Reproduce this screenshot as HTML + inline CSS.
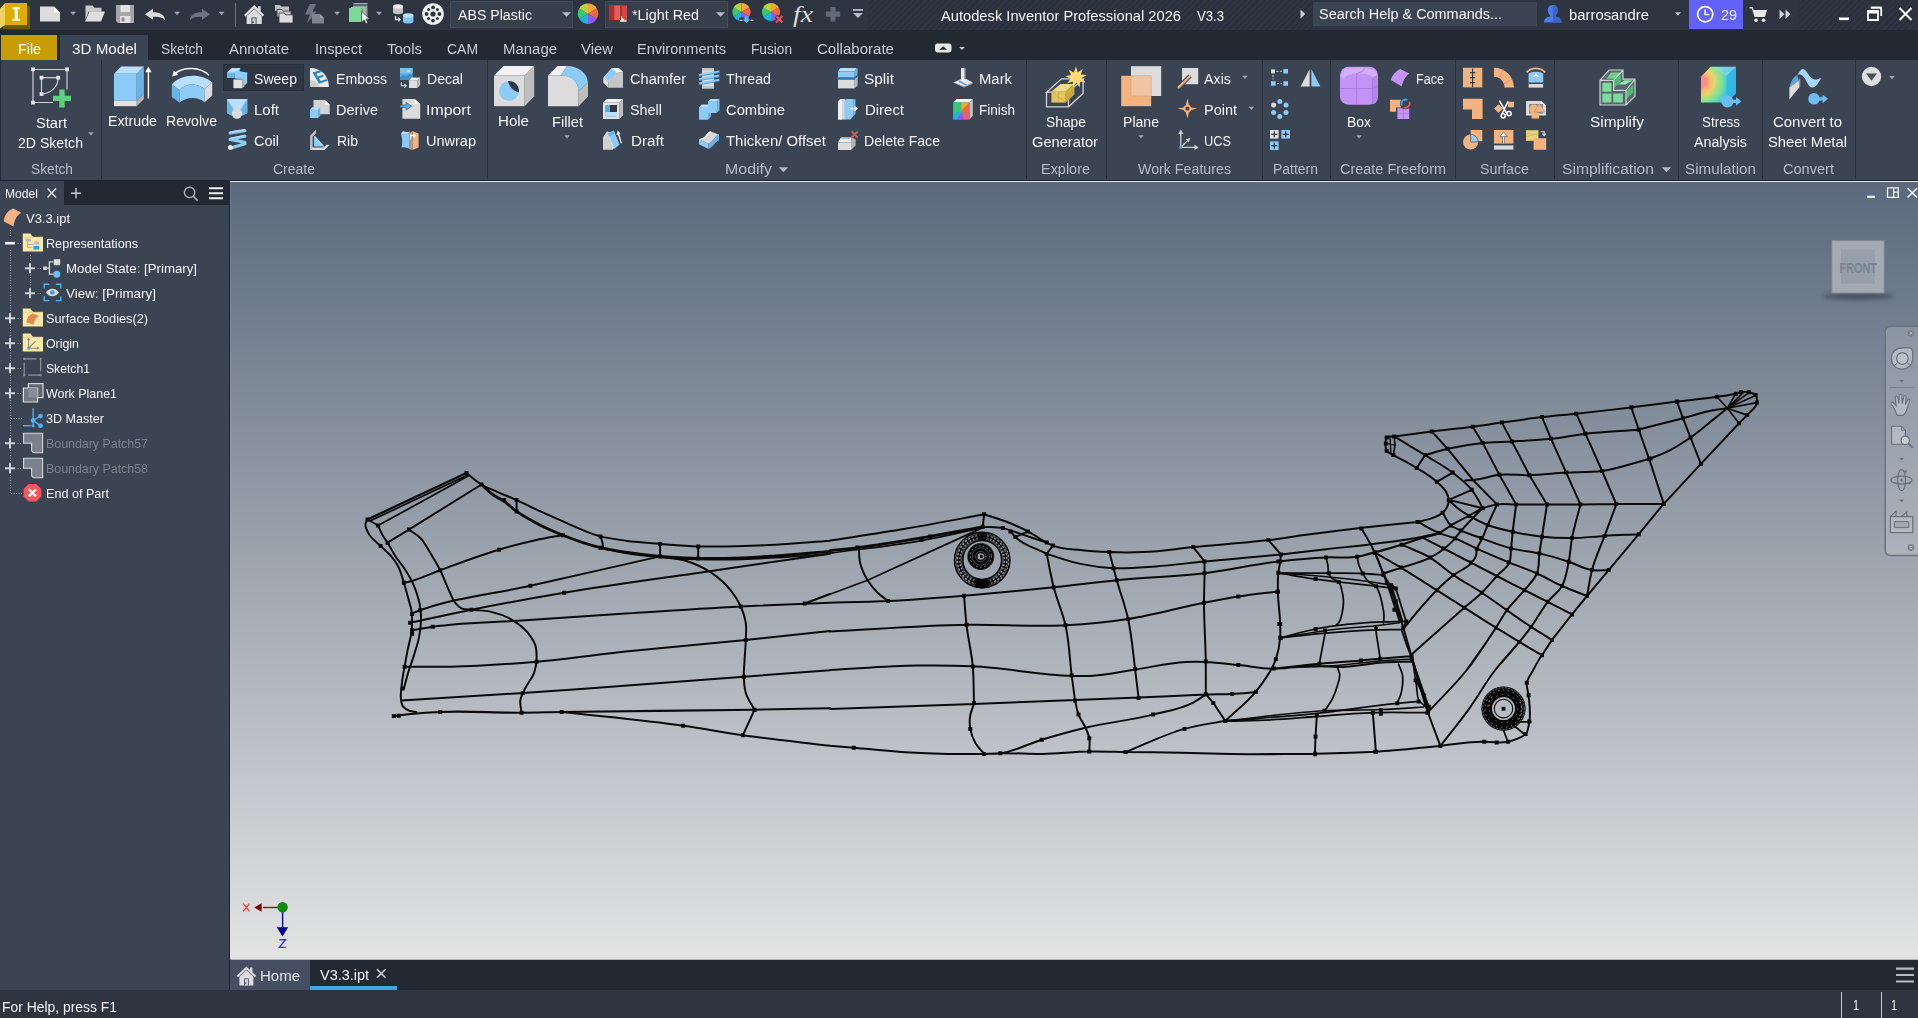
<!DOCTYPE html>
<html lang="en"><head><meta charset="utf-8"><title>Autodesk Inventor Professional 2026 - V3.3</title>
<style>
html,body{margin:0;padding:0;}
body{width:1918px;height:1018px;overflow:hidden;background:#3b4453;position:relative;font-family:"Liberation Sans",sans-serif;}
.r{position:absolute;}
.t{position:absolute;white-space:nowrap;line-height:20px;height:20px;transform-origin:0 50%;}
svg{position:absolute;overflow:visible;}
</style></head><body>
<div class="r" style="left:0px;top:0px;width:1918px;height:30px;background:#2e3440;"></div>
<div class="r" style="left:868px;top:0px;width:445px;height:30px;background:repeating-linear-gradient(135deg,rgba(0,0,0,0) 0 2.2px,rgba(0,0,0,.065) 2.2px 4.4px);"></div>
<div class="r" style="left:1799px;top:0px;width:119px;height:30px;background:repeating-linear-gradient(135deg,rgba(0,0,0,0) 0 2.2px,rgba(0,0,0,.065) 2.2px 4.4px);"></div>
<div class="r" style="left:0px;top:30px;width:1918px;height:30px;background:#222933;"></div>
<div class="r" style="left:1px;top:35px;width:56px;height:25px;background:#c79c07;"></div>
<div class="r" style="left:60px;top:35px;width:88px;height:25px;background:#3b4453;"></div>
<div class="r" style="left:0px;top:60px;width:1918px;height:120px;background:#3b4453;"></div>
<div class="r" style="left:0px;top:60px;width:1px;height:120px;background:#262c38;"></div>
<div class="r" style="left:0px;top:180px;width:1918px;height:1px;background:#1d222c;"></div>
<div class="r" style="left:101px;top:60px;width:1px;height:119px;background:#2a303c;"></div>
<div class="r" style="left:487px;top:60px;width:1px;height:119px;background:#2a303c;"></div>
<div class="r" style="left:1026px;top:60px;width:1px;height:119px;background:#2a303c;"></div>
<div class="r" style="left:1106px;top:60px;width:1px;height:119px;background:#2a303c;"></div>
<div class="r" style="left:1262px;top:60px;width:1px;height:119px;background:#2a303c;"></div>
<div class="r" style="left:1330px;top:60px;width:1px;height:119px;background:#2a303c;"></div>
<div class="r" style="left:1455px;top:60px;width:1px;height:119px;background:#2a303c;"></div>
<div class="r" style="left:1554px;top:60px;width:1px;height:119px;background:#2a303c;"></div>
<div class="r" style="left:1678px;top:60px;width:1px;height:119px;background:#2a303c;"></div>
<div class="r" style="left:1762px;top:60px;width:1px;height:119px;background:#2a303c;"></div>
<div class="r" style="left:1855px;top:60px;width:1px;height:119px;background:#2a303c;"></div>
<div class="r" style="left:223px;top:64px;width:81px;height:27px;background:#2e3644;border:1px solid #282e3a;box-sizing:border-box;"></div>
<div class="r" style="left:0px;top:181px;width:229px;height:24px;background:#222933;"></div>
<div class="r" style="left:0px;top:181px;width:64px;height:24px;background:#3b4453;"></div>
<div class="r" style="left:0px;top:205px;width:229px;height:785px;background:#3b4453;"></div>
<div class="r" style="left:229px;top:181px;width:1px;height:809px;background:#1d222c;"></div>
<div class="r" style="left:230px;top:181px;width:1688px;height:779px;background:linear-gradient(#5a697c,#e3e3e3);border-left:1px solid rgba(255,255,255,.10);border-top:1px solid rgba(255,255,255,.06);border-bottom:1px solid rgba(255,255,255,.5);box-sizing:border-box;"></div>
<div class="r" style="left:230px;top:960px;width:1688px;height:30px;background:#222933;"></div>
<div class="r" style="left:230px;top:960px;width:80px;height:30px;background:#464e62;"></div>
<div class="r" style="left:310px;top:986px;width:87px;height:4px;background:#38a8e0;"></div>
<div class="r" style="left:0px;top:990px;width:1918px;height:28px;background:#2e3440;"></div>
<div class="r" style="left:1841px;top:992px;width:1px;height:26px;background:#c8ccd2;"></div>
<div class="r" style="left:1881px;top:992px;width:1px;height:26px;background:#c8ccd2;"></div>
<div class="r" style="left:1313px;top:2px;width:224px;height:24px;background:#3b4453;"></div>
<div class="r" style="left:450px;top:1px;width:123px;height:27px;background:#373e4c;border:1px solid #434b5b;box-sizing:border-box;"></div>
<div class="r" style="left:605px;top:1px;width:123px;height:27px;background:#373e4c;border:1px solid #434b5b;box-sizing:border-box;"></div>
<div class="r" style="left:1689px;top:0px;width:54px;height:29px;background:#6262fa;"></div>
<div class="r" style="left:235px;top:3px;width:1px;height:24px;background:#6a7383;"></div>
<svg style="left:0;top:0" width="1918" height="1018" viewBox="0 0 1918 1018">
<path d="M3 25h27v4.3H3z M27 6h3v20h-3z" fill="#6e5800"/><path d="M0 8.5L5 3.2V25L0 28.5z" fill="#efd266"/><path d="M5 3h22v22H5z" fill="#dfad00"/><path d="M12.6 7h7.2v2.2h-2.1v9.6h2.1V21h-7.2v-2.2h2.1V9.2h-2.1z" fill="#fff"/>
<path d="M40 6.5h14l6 6v9H40z" fill="#dcdcdc"/><path d="M54 6.5l6 6h-6z" fill="#f6f6f6"/>
<path d="M70.0 11.7h6l-3.0 3.6z" fill="#9aa4b8"/>
<path d="M85.5 5.5h7l2 2.2h7v4H88.5l-3 8z" fill="#c9c9c9"/><path d="M89.5 11.5h15.5l-4 10H85z" fill="#dedede"/>
<path d="M116 5h18v18h-16l-2-2z" fill="#a6a6a6"/><path d="M120.5 5h9.5v7h-9.5z M120 16h10.5v7H120z" fill="#e2e2e2"/><path d="M121.5 17.5h3v4h-3z" fill="#8a8a8a"/>
<path d="M145 14.2l8-5.4v3.4c7 0 11.8 2.6 12 8-2.6-3.2-6.4-3.6-12-3.4v3z" fill="#dcdcdc"/>
<path d="M174.0 11.7h6l-3.0 3.6z" fill="#9aa4b8"/>
<path d="M210 14.2l-8-5.4v3.4c-7 0-11.8 2.6-12 8 2.6-3.2 6.4-3.6 12-3.4v3z" fill="#6d7481"/>
<path d="M218.5 11.7h6l-3.0 3.6z" fill="#9aa4b8"/>
<path d="M244 15l10.2-10 4 3.8V6.2h2.4v5l3.6 3.8-1.6 1.6-8.4-8.2-8.6 8.2z" fill="#dcdcdc"/><path d="M246.6 16.2l7.6-7.2 7.6 7.2V24h-15.2z" fill="#dcdcdc"/><path d="M251.5 17.5h5V24h-5z" fill="#2e3440"/><path d="M252.3 18.3h3.4V24h-3.4z" fill="#cfcfcf"/><path d="M252.3 21.6h1.4V23h-1.4z" fill="#2e3440"/>
<path d="M275 5h5l1.2 1.6H289V11h-14z" fill="#bdbdbd"/><path d="M277 9.5h5l1.2 1.6H291V17h-14z" fill="#c9c9c9" stroke="#2e3440" stroke-width=".8"/><path d="M279 13h5.4l1.2 1.8H293V23h-14z" fill="#dcdcdc" stroke="#2e3440" stroke-width=".8"/>
<path d="M310 4h6l-3.4 7.4h4L307 23.4l2.8-9H305z" fill="#6d7481"/><path d="M312 14h8l4 4v5.6h-12z" fill="#7d8490"/><path d="M320 14l4 4h-4z" fill="#9aa0aa"/>
<path d="M334.0 11.7h6l-3.0 3.6z" fill="#9aa4b8"/>
<path d="M353.5 3h14v1.4h-14z" fill="#6ed08d"/><path d="M353 5.5h14.5V20H353z" fill="#9a9a9a"/><path d="M351 7h14.5v14H351z" fill="#b4b4b4"/><path d="M349 8h12.4v14H349z" fill="#7dd89a"/><path d="M361.4 8h1.8v14h-1.8z" fill="#58b877"/><path d="M361.6 11.2v11l2.6-2.4 1.8 4 1.8-.8-1.8-3.9 3.4-.2z" fill="#fff" stroke="#2e3440" stroke-width=".7"/>
<path d="M376.0 11.7h6l-3.0 3.6z" fill="#9aa4b8"/>
<path d="M393 6.5v6c0 2.2 10 2.2 10 0v-6z" fill="#c4c4c4"/><ellipse cx="398" cy="6.5" rx="5" ry="2.2" fill="#ececec"/><path d="M403 15.5v6.3c0 2.4 10.4 2.4 10.4 0v-6.3z" fill="#7cc4f6"/><ellipse cx="408.2" cy="15.5" rx="5.2" ry="2.2" fill="#b6e0ff"/><path d="M395.5 16v3.5h4.5M398.3 17.6l2 1.9-2 1.9" stroke="#dcdcdc" stroke-width="1.3" fill="none"/>
<circle cx="433" cy="14" r="10" fill="#f2f2f2"/><g fill="#2e3440"><circle cx="433" cy="14" r="2.6"/><circle cx="433" cy="7.4" r="1.9"/><circle cx="433" cy="20.6" r="1.9"/><circle cx="426.6" cy="14" r="1.9"/><circle cx="439.4" cy="14" r="1.9"/><circle cx="428.6" cy="9.6" r="1.5"/><circle cx="437.4" cy="9.6" r="1.5"/><circle cx="428.6" cy="18.4" r="1.5"/><circle cx="437.4" cy="18.4" r="1.5"/></g><circle cx="433" cy="14" r="10" fill="none" stroke="#f2f2f2" stroke-width="1.6"/>
<path d="M562.0 12.2h9l-4.5 4.6z" fill="#b4bccb"/>
<path d="M716.0 12.2h9l-4.5 4.6z" fill="#b4bccb"/>
<path d="M588 13.7L588.00 3.50A10.2 10.2 0 0 1 596.83 8.60z" fill="#f7a531"/><path d="M588 13.7L596.83 8.60A10.2 10.2 0 0 1 596.83 18.80z" fill="#f06449"/><path d="M588 13.7L596.83 18.80A10.2 10.2 0 0 1 588.00 23.90z" fill="#8b5cf6"/><path d="M588 13.7L588.00 23.90A10.2 10.2 0 0 1 579.17 18.80z" fill="#1fb6d9"/><path d="M588 13.7L579.17 18.80A10.2 10.2 0 0 1 579.17 8.60z" fill="#37c978"/><path d="M588 13.7L579.17 8.60A10.2 10.2 0 0 1 588.00 3.50z" fill="#b7d43a"/>
<path d="M741.5 12L741.50 3.00A9 9 0 0 1 749.29 7.50z" fill="#f7a531"/><path d="M741.5 12L749.29 7.50A9 9 0 0 1 749.29 16.50z" fill="#f06449"/><path d="M741.5 12L749.29 16.50A9 9 0 0 1 741.50 21.00z" fill="#8b5cf6"/><path d="M741.5 12L741.50 21.00A9 9 0 0 1 733.71 16.50z" fill="#1fb6d9"/><path d="M741.5 12L733.71 16.50A9 9 0 0 1 733.71 7.50z" fill="#37c978"/><path d="M741.5 12L733.71 7.50A9 9 0 0 1 741.50 3.00z" fill="#b7d43a"/><path d="M739 17.5h12v3h-12z" fill="#2e3440"/><path d="M744.5 16.5h4v3h2l-4 3.6-4-3.6h2z" fill="#5bb5f0"/><path d="M739.5 20.2h3M750.5 20.2h3" stroke="#dcdcdc" stroke-width="1"/>
<path d="M771 12L771.00 3.00A9 9 0 0 1 778.79 7.50z" fill="#f7a531"/><path d="M771 12L778.79 7.50A9 9 0 0 1 778.79 16.50z" fill="#f06449"/><path d="M771 12L778.79 16.50A9 9 0 0 1 771.00 21.00z" fill="#8b5cf6"/><path d="M771 12L771.00 21.00A9 9 0 0 1 763.21 16.50z" fill="#1fb6d9"/><path d="M771 12L763.21 16.50A9 9 0 0 1 763.21 7.50z" fill="#37c978"/><path d="M771 12L763.21 7.50A9 9 0 0 1 771.00 3.00z" fill="#b7d43a"/><path d="M776 16l6.4 6.4M782.4 16L776 22.4" stroke="#2e3440" stroke-width="4.2"/><path d="M776 16l6.4 6.4M782.4 16L776 22.4" stroke="#ee4d5a" stroke-width="2.2"/>
<path d="M609 5.5h18v16.5h-18z" fill="#d24848"/><path d="M609 5.5h5.5v16.5H609z M620 5.5h2.2v16.5H620z" fill="#b52c2c"/><path d="M614.5 5.5h5.5v16.5h-5.5z" fill="#e06060"/><path d="M609 20h18v2h-18z" fill="#8e1e1e"/><path d="M621 15.5l2 3.2h1.2v1.6h2.4v1.4H620v-1.4h1z" fill="#f3f3f3"/>
<text x="793" y="21.5" font-family="Liberation Serif" font-style="italic" font-size="23" fill="#dcdcdc" textLength="20" lengthAdjust="spacingAndGlyphs">fx</text>
<path d="M830.4 7h5.2v4.6h4.6v5.2h-4.6v4.6h-5.2v-4.6h-4.6v-5.2h4.6z" fill="#636a77"/>
<path d="M853 9h10v1.8h-10z" fill="#b4bccb"/>
<path d="M853.0 13.0h10l-5.0 5z" fill="#b4bccb"/>
<path d="M1300.5 9.5l4.8 4.5-4.8 4.5z" fill="#c9cfd8"/>
<path d="M1544 22.5c0-4 3-5.6 6-6v-1.4c-1.6-1-2.2-2.8-2.2-5 0-3.2 2-5.2 5-5.2s5 2 5 5.2c0 2.2-.6 4-2.2 5v1.4c3 .4 6 2 6 6z" fill="#4f7be8"/><path d="M1552.8 4.9c3 0 5 2 5 5.2 0 2.2-.6 4-2.2 5v1.4c3 .4 6 2 6 6h-8.8z" fill="#3b63c8"/>
<path d="M1675.0 12.2h6l-3.0 3.6z" fill="#b4bccb"/>
<circle cx="1705.2" cy="14.2" r="7.6" fill="none" stroke="#fff" stroke-width="1.7"/><path d="M1705.2 9.5v5h4.2" stroke="#fff" stroke-width="1.6" fill="none"/>
<path d="M1749.5 7h3l1 3h13.5l-2 7h-10.5l-2.6-8.6h-2.4z" fill="#e8e8e8"/><circle cx="1756" cy="20.3" r="1.8" fill="#e8e8e8"/><circle cx="1763.6" cy="20.3" r="1.8" fill="#e8e8e8"/>
<path d="M1779.5 9.5l5 4.7-5 4.7z M1785.5 9.5l5 4.7-5 4.7z" fill="#c9cfd8"/>
<path d="M1839 17.5h10v2.6h-10z" fill="#fff"/><path d="M1870.8 7.6h10.4v8.4M1868 11h10v9h-10z" fill="none" stroke="#fff" stroke-width="1.8"/><path d="M1868 11h10v2.4h-10z M1870.8 6.8h10.4v1.8h-10.4z" fill="#fff"/><path d="M1899.5 8l12 12M1911.5 8l-12 12" stroke="#fff" stroke-width="2"/>
<rect x="935" y="43.6" width="16.5" height="8.8" rx="2.4" fill="#e8e8e8"/><path d="M939.4 49.8l3.8-3.6 3.8 3.6z" fill="#222933"/>
<path d="M959.2 46.9h5.6l-2.8 3.2z" fill="#c9cfd8"/>
<g fill="none" stroke="#cfcfcf" stroke-width="1.2"><path d="M33 69.5h34v20M33 69.5v33h20"/><path d="M41.5 77.7h16.7M41.5 77.7V94"/><path d="M58.2 77.7C58 87 51 93.6 41.5 94" /></g><g fill="#e4e4e4"><rect x="31.1" y="67.39999999999999" width="3.8" height="3.8"/><rect x="65.1" y="67.39999999999999" width="3.8" height="3.8"/><rect x="31.1" y="100.69999999999999" width="3.8" height="3.8"/><rect x="39.6" y="75.8" width="3.8" height="3.8"/><rect x="56.300000000000004" y="75.8" width="3.8" height="3.8"/><rect x="39.6" y="92.1" width="3.8" height="3.8"/></g><path d="M59.3 89.4h5.4v6.3H71v5.4h-6.3v6.3h-5.4v-6.3H53v-5.4h6.3z" fill="#5ed17e"/>
<path d="M88.2 132.20000000000002h5.6l-2.8 3.2z" fill="#9aa4b8"/>
<path d="M114 100.8h22.7v5.4H114z" fill="#e2e2e2"/><path d="M136.7 100.8l7.2-7.2V99l-7.2 7.2z" fill="#b4b4b4"/><path d="M114 73.8h22.7v27H114z" fill="#8ccbf8"/><path d="M114 73.8l7.2-7.4h22.7l-7.2 7.4z" fill="#b8e0fd"/><path d="M136.7 73.8l7.2-7.4v27.2l-7.2 7.2z" fill="#6bb2e6"/><path d="M148.4 98.5V70" stroke="#fff" stroke-width="1.4"/><path d="M145.2 72.2l3.2-5.6 3.2 5.6z" fill="#fff"/>
<path d="M171.8 84.5C180 73.5 203 73 212.2 82.5L204.6 89C196 82.6 186 83.4 179.4 90z" fill="#b8e0fd"/><path d="M171.8 84.5L179.4 90v12.6l-7.6-5.6z" fill="#6bb2e6"/><path d="M179.4 90C186 83.4 196 82.6 204.6 89v13.2C197 96 186 97 179.4 102.6z" fill="#8ccbf8"/><path d="M204.6 89l7.6-6.5v13l-7.6 6.7z" fill="#dcdcdc"/><path d="M209 75.2C200 66.5 184 66.6 175 73.4" fill="none" stroke="#fff" stroke-width="1.5"/><path d="M172.2 76.4l1.6-6 4.4 4.4z" fill="#fff"/>
<path d="M227 72.5l5-4.6h8.4l-.8 3.4 7.6 1.2v10.4l-4.6 4.2V79l-8-.6v-4.6z" fill="#8ccbf8"/><path d="M227 72.5h7.6V78H227z" fill="#6bb2e6"/><path d="M232 67.9h8.4l-5.8 4.6H227z" fill="#b8e0fd"/><path d="M233.4 79.4h9v8.8h-9z" fill="#e2e2e2"/><path d="M242.4 79.4l2-1.8v8.6l-2 2z" fill="#b4b4b4"/>
<path d="M227 99h20.3v14l-4.3 2.6h-11.7l-4.3-2.6z" fill="#8ccbf8"/><path d="M227 99l8 11h4.6l7.7-11z" fill="#b8e0fd"/><path d="M227 99l6.4 11.4-2.1 5.2-4.3-2.6zM247.3 99l-6.4 11.4 2.1 5.2 4.3-2.6z" fill="#6bb2e6"/><circle cx="237" cy="113.6" r="5.2" fill="#dcdcdc"/>
<g fill="none" stroke="#8ccbf8" stroke-width="3" stroke-linecap="round"><path d="M230 133l15-2.2M245 136.2l-15 3.2M230 139.6l15 2.6M245 143.8l-13 4"/></g><g fill="none" stroke="#b8e0fd" stroke-width="1.2"><path d="M230 131.8l15-2.2M230 138.4l15-3"/></g><circle cx="230.4" cy="147.4" r="2.5" fill="#e8e8e8"/>
<path d="M310 68c10 0 18.6 6.6 19 19h-19z" fill="#ececec"/><path d="M310 80c4 0 8.6 2.6 9.4 7H310z" fill="#cfcfcf"/><path d="M312.5 72.6l8.6-2.6 1.2 1.8-6 2 1.6 2.6 5-1.6 1 1.6-5 1.8 1.8 2.8 6-2 1 1.8-8.6 3z" fill="#2f86c4"/>
<path d="M313.5 100h11.4l4.8 4.6v9.6h-16.2z" fill="#d4d4d4"/><path d="M324.9 100l4.8 4.6h-4.8z" fill="#f4f4f4"/><path d="M310 109.4h8v8.6h-8z" fill="#8ccbf8"/><path d="M310 109.4l2.2-2.2h8l-2.2 2.2z" fill="#b8e0fd"/><path d="M318 109.4l2.2-2.2v8.6L318 118z" fill="#6bb2e6"/>
<path d="M310 136l6-6v3l-3.6 3.8v10.6h11l3.4-2.6h3l-5.4 5.2H310z" fill="#dcdcdc"/><path d="M316 130v3l-3.6 3.8v10.6L310 150v-14z" fill="#bdbdbd"/><path d="M314 146.4V137c0-.8 1-1 1.400-.4l8.800 9.800z" fill="#8ccbf8"/><path d="M314 137c0-.8 1-1 1.400-.4l8.800 9.800-1.600-.2z" fill="#b8e0fd"/>
<path d="M400 68h12.600v12H400z" fill="#5aa9e0"/><path d="M400 68h12.600v5.400H400z" fill="#7dc2f2"/><path d="M400 77.400l3.200-2.600 2.800 1.600 3-3 3.600 2.400V80H400z" fill="#3f8fcb"/><circle cx="408.800" cy="71.200" r="1.200" fill="#f7e07a"/><path d="M409 80.400h8.400V88H409z" fill="#dcdcdc"/><path d="M409 80.400l2.800-2.800h8.400l-2.800 2.800z" fill="#f0f0f0"/><path d="M417.400 80.400l2.800-2.800v7.600l-2.800 2.800z" fill="#b9b9b9"/><path d="M401.400 82v3.800h4.400M404.400 84l1.800 1.800-1.800 1.800" fill="none" stroke="#dcdcdc" stroke-width="1.100"/>
<path d="M402.400 99h12.400l5.400 5v14.800h-17.800z" fill="#dcdcdc"/><path d="M414.800 99l5.400 5h-5.400z" fill="#f6f6f6"/><path d="M400 105h6v-2.800l5.600 4-5.600 4v-2.800h-6z" fill="#4fb0f4" stroke="#3b4453" stroke-width=".6"/>
<path d="M401 133.400c2.600 1.400 5.400 1.400 8-.2l.600 15.800c-2.600-1.600-5.200-2.400-8-1.400 1-4.600.8-9.400-.600-14.200z" fill="#8ccbf8"/><path d="M401 133.400l2-2.400c2.400 1.200 4.600 1.400 7 .400l-1 1.800c-2.600 1.600-5.400 1.600-8 .2z" fill="#b8e0fd"/><path d="M412.400 131l6.200 2.400v14.200l-6.200 2.400z" fill="#f4b27f"/><path d="M409 133.200l3.400-2.200v19l-2.800-1z" fill="#d89868"/><path d="M409.200 140.600c1.800-1.400 2.600-3.400 2.400-6l1.400.6c.4 3-.4 5.400-2.200 7 1 2.600.8 5-.6 7.200l-1-.4c1.200-2.400 1.200-5 0-8.400z" fill="#9a9a9a"/><path d="M410.600 139.400v-4h3.800M413.200 133.600l2.200 1.800-2.200 1.800" fill="none" stroke="#fff" stroke-width="1.200"/>
<path d="M494 75.600h30.600v30.600H494z" fill="#dcdcdc"/><path d="M494 75.600l9.600-9.600h30.600l-9.600 9.600z" fill="#f2f2f2"/><path d="M524.600 75.600l9.600-9.600v30.600l-9.600 9.600z" fill="#bdbdbd"/><circle cx="509" cy="91" r="10" fill="#8ccbf8"/><path d="M507.800 81.100a10 10 0 0 1 11.100 11.400c-5.200-1.400-9.400-5.400-11.100-11.400z" fill="#2f3745"/>
<path d="M548 75.600l9.600-9.600h9.400L561 75.600z" fill="#f2f2f2"/><path d="M548 75.600h15c8 0 15.600 6.600 15.600 15.400v15.200H548z" fill="#dcdcdc"/><path d="M578.600 91l9.400-8.600v14.200l-9.400 9.600z" fill="#bdbdbd"/><path d="M561 75.600l6-9.600c11 0 20.400 7 21 16.400l-9.400 8.600c0-8.800-7.600-15.400-17.600-15.400z" fill="#8ccbf8"/>
<path d="M564.2 135.20000000000002h5.6l-2.8 3.2z" fill="#9aa4b8"/>
<path d="M603.3 77.7l4.900 4.100v5.900l-4.900-5.300z" fill="#e0e0e0"/><path d="M608.200 81.200l8.300-8.200 6.500-1.200v15.900h-14.800z" fill="#c6c6c6"/><path d="M611.800 68h7.100l4.100 3.800-6.500 1.200z" fill="#f0f0f0"/><path d="M603.300 77.700l8.500-9.700 4.700 5-8.300 8.800z" fill="#ececec"/><path d="M604.200 76.600l7.600-7.800 4.600 4.200-8.200 8.200z" fill="#8ccbf8"/>
<path d="M603 102.600h16.400V119H603z" fill="#e4e4e4"/><path d="M603 102.600l3.800-3.600H623l-3.600 3.600z" fill="#f4f4f4"/><path d="M619.400 102.600L623 99v16.200l-3.600 3.800z" fill="#bdbdbd"/><path d="M605.400 105h11.600v11.600h-11.600z" fill="#2f3745"/><path d="M605.400 105h4.400v7h7.200v4.600h-11.600z" fill="#8ccbf8"/><path d="M605.400 112h11.600v4.600h-11.600z" fill="#b8e0fd"/><path d="M605.400 105h4.400v7h-4.400z" fill="#5aa9e0"/>
<path d="M603 137.200l4.200-5.600 4 1.200 4.400 13.200-2.800 3.400H603z" fill="#dcdcdc"/><path d="M603 137.200l4.200-5.600 3.200 9.400 2.400 8.400H603z" fill="#d0d0d0"/><path d="M608 133.200l5.800-2.600 5.800 14-5.200 4.400z" fill="#8ccbf8"/><path d="M608 133.200l5.800-2.600 1.200 3-5.600 2.800z" fill="#6bb2e6"/><path d="M621.400 143.400l-3-9.600" stroke="#fff" stroke-width="1.300"/><path d="M616.400 135l1.400-4.400 2.800 3.400z" fill="#fff"/>
<path d="M702 68h12v20.400h-12z" fill="#dcdcdc"/><path d="M702 68h12v2.400h-12zM702 86h12v2.400h-12z" fill="#c4c4c4"/><g stroke="#8ccbf8" stroke-width="2" fill="none"><path d="M699 75l20.300-3.600M699 79.200l20.300-3.600M699 83.400l20.300-3.600"/></g><g stroke="#3a8fd0" stroke-width=".8" fill="none"><path d="M699 76.400l20.300-3.600M699 80.600l20.300-3.600M699 84.800l20.300-3.600"/></g>
<path d="M699 107.200h9v-5.600h8.600l2.700-2.600v11.400h-8.600v6.400l-2.700 2.600H699z" fill="#8ccbf8"/><path d="M699 107.200l2.700-2.600h6.300v-3l2.700-2.600h8.600l-2.700 2.600H708v5.600z" fill="#b8e0fd"/><path d="M716.600 101.600l2.700-2.600v11.400l-2.700 2.600zM708 113l2.700-2.600v6.400l-2.700 2.600z" fill="#6bb2e6"/><path d="M699 107.200h9v-5.600h8.600V113H708v6.400h-9z" fill="#8ccbf8"/>
<path d="M699 139.200c2.400-.4 4-1 5.600-2.400 2-1.800 3.200-4.400 5.600-5.500l8.800 3.500c-2.400.6-3.400 2.200-4.600 3.600-1.600 2-3.400 4-6 5.300z" fill="#d8d8d8"/><path d="M699 139.200l9.400 4.500v5.300l-9.400-4.700z" fill="#8ccbf8"/><path d="M708.400 143.700c2.600-1.300 4.400-3.300 6-5.300 1.200-1.400 2.200-3 4.600-3.600v5.600c-2.400.6-3.400 2.200-4.600 3.600-1.600 2-3.400 3.700-6 5z" fill="#6bb2e6"/><path d="M699 139.200c2.400-.4 4-1 5.600-2.400 2-1.800 3.200-4.400 5.600-5.500l1.400.6c-2.400 1.100-3.600 3.700-5.600 5.500-1.600 1.400-3.200 2-5.600 2.400z" fill="#f2f2f2"/>
<path d="M838 71.600l2.400-3.600h16l-1.800 3.600z" fill="#b8e0fd"/><path d="M838 71.600h16.600v6H838z" fill="#8ccbf8"/><path d="M854.600 71.600l1.800-3.600 1.200.6v6l-3 3z" fill="#6bb2e6"/><path d="M836.800 78.200l2-1h17l2.400-2v1.400l-2.400 2.200h-19z" fill="#2f86c4"/><path d="M838 79.600h16.600v8.800H838z" fill="#dcdcdc"/><path d="M854.600 79.600l3-2.800v8.600l-3 3z" fill="#b9b9b9"/>
<path d="M838 103.400c0-2.400 1.400-4.400 4-4.400h3v20.400h-7z" fill="#d6d6d6"/><path d="M838 103.400c0-2.400 1.400-4.400 4-4.400v20.400h-4z" fill="#efefef"/><path d="M844.400 101.600c0-1.600 1-2.600 2.600-2.600h8.600c-1.400 0-2.600 1.200-2.600 2.600v15l-2.400 2.800h-6.200z" fill="#8ccbf8"/><path d="M853 101.600c0-1.400 1.200-2.600 2.600-2.600v14.800l-2.600 2.800z" fill="#6bb2e6"/><path d="M850.400 108.600h5M854.400 106.400l2.600 2.200-2.600 2.200" fill="none" stroke="#fff" stroke-width="1.300"/>
<path d="M838 142.600h13V150h-13z" fill="#dcdcdc"/><path d="M838 142.600l2.800-5h10.800l-.6 5z" fill="#ececec"/><path d="M851 142.600l.6-5 4 1.600v6.400l-4.600 4.400z" fill="#b4b4b4"/><path d="M841.400 137.400h9l-.2 1.600h-9.800z" fill="#8ccbf8"/><path d="M851.600 131.400l6.200 6.200M857.800 131.400l-6.200 6.200" stroke="#ee4d5a" stroke-width="2"/>
<path d="M961 68h3.600v12H961z" fill="#e8e8e8"/><path d="M964.600 68h1v12h-1z" fill="#9a9a9a"/><path d="M953.300 82.400l8-3.400h5l6.500 3.600-8.600 4z" fill="#ececec"/><path d="M958 81.400l1.600-.8 8.400 4.600-1.600.8z" fill="#4a9fe0"/><path d="M953.300 82.400l10.900 4.200 8.600-4v.8l-8.600 4z" fill="#bdbdbd"/>
<path d="M953.300 102.600l3.400-3.600h16.100l-3.400 3.600z" fill="#f4f4f4"/><path d="M969.400 102.600l3.400-3.600v16.800l-3.400 3.600z" fill="#c4c4c4"/><path d="M953.300 102.600h8.050l0 8.400z" fill="#f06449" transform="translate(0 0)"/><path d="M953.300 102.600h16.100v16.800h-16.100z" fill="#37c978"/><path d="M953.300 102.600h8l.05 8.400z" fill="#37c978"/><path d="M961.300 111l-8-8.400h8z" fill="#37c978"/><path d="M961.350 111L953.300 102.600h8.050z" fill="#37c978"/><path d="M961.350 111l0-8.400h8.050z" fill="#f7a531"/><path d="M961.350 111l8.050-8.400v12.600z" fill="#f06449"/><path d="M961.350 111l8.050 4.200v4.200h-5.400z" fill="#ee5a7a"/><path d="M961.350 111l2.650 8.400h-7z" fill="#8b5cf6"/><path d="M961.350 111l-4.350 8.400h-3.700v-6z" fill="#1fb6d9"/><path d="M961.350 111l-8.050 2.400V102.600z" fill="#37c978"/>
<g fill="none" stroke="#d4d4d4" stroke-width="1.3"><path d="M1046.500 92.200l15-13.400h21.600l-14.600 13.400zM1046.500 92.200v14.600h22v-14.600M1068.500 106.800l14.600-13.400V78.800"/></g><path d="M1051.400 91.600l9-7.600h14l-8.600 7.600z" fill="#f0d98a"/><path d="M1051.400 91.600h14.400v11h-14.400z" fill="#e3c45c"/><path d="M1065.800 91.600l8.600-7.600v10.400l-8.600 8.200z" fill="#c9a93e"/><path d="M1052 92l13.400 10M1058.600 91.600v11" stroke="#d1b046" stroke-width=".8"/><path d="M1076 66.600l1.800 5.800 5-3.600-2 5.600 6 .6-5.200 3 4 4.400-6-1 .4 6-3.600-4.800-3.400 5-.2-6.200-5.800 2 3.800-4.800-5.600-2.400 6-1.200-2.800-5.400 5.400 3z" fill="#ffd978"/>
<path d="M1131 66.200h30.200V96H1131z" fill="#dcdcdc"/><path d="M1121.200 75.800h30v30.400h-30z" fill="#f4b27f"/><path d="M1131 75.800h20.200V96H1131z" fill="#efc5a6"/><path d="M1131 75.800h20.200V96H1131z" fill="none" stroke="#d9a27a" stroke-width=".6"/>
<path d="M1138.2 135.20000000000002h5.6l-2.8 3.2z" fill="#9aa4b8"/>
<path d="M1182 68h16.200v16.200H1182z" fill="#dcdcdc"/><path d="M1178.600 87.400l11.400-11.400" stroke="#3b4453" stroke-width="4.400"/><path d="M1178.600 87.400l11.400-11.400" stroke="#f4b27f" stroke-width="2.200" stroke-linecap="round"/><path d="M1179.400 88l11.200-11.200" stroke="#c98a5c" stroke-width=".8"/>
<path d="M1242.2 75.80000000000001h5.6l-2.8 3.2z" fill="#9aa4b8"/>
<path d="M1187.400 98.600l1.600 6.600c1 .4 1.800 1.200 2.200 2.200l6 1.200-6 1.400c-.4 1-1.200 1.800-2.200 2.200l-1.600 6.200-1.600-6.200c-1-.4-1.800-1.200-2.200-2.200l-6-1.400 6-1.200c.4-1 1.200-1.800 2.200-2.200z" fill="#f4b27f"/><path d="M1185.600 106.800h3.600v3.600h-3.600z" fill="#3b4453"/>
<path d="M1248.5 106.80000000000001h5.6l-2.8 3.2z" fill="#9aa4b8"/>
<g stroke="#cfcfcf" stroke-width="1.300" fill="none"><path d="M1180.800 147.400v-15M1180.800 147.400h15M1180.800 147.400l8-8"/></g><path d="M1178.200 134l2.600-4.600 2.600 4.600zM1194.400 144.800l4.400 2.600-4.400 2.600zM1185.800 139.400l4.600-1.600-1.600 4.600z" fill="#cfcfcf"/><path d="M1179.200 145.800h3v3h-3z" fill="#3aa0f0"/>
<path d="M1271 69.400h4v4h-4z" fill="#e0e0e0"/><g fill="#8ccbf8"><path d="M1283.400 69h4.600v4.600h-4.600zM1271 81.200h4.600v4.600H1271zM1283.400 81.200h4.600v4.600h-4.600z"/></g><path d="M1276.400 71.400h5.400M1273 75v4.600M1277 83.600h4.800" stroke="#d0d0d0" stroke-width="1" stroke-dasharray="2.200 1.400"/>
<path d="M1300.600 86.600l9-17.400v17.400z" fill="#dcdcdc"/><path d="M1311.400 86.600V69.200l9 17.400z" fill="#8ccbf8"/>
<circle cx="1273.600" cy="105" r="2.500" fill="#dcdcdc"/><g fill="#8ccbf8"><circle cx="1279.800" cy="101.400" r="2.500"/><circle cx="1286" cy="105" r="2.500"/><circle cx="1286" cy="112.600" r="2.500"/><circle cx="1279.800" cy="116.400" r="2.500"/><circle cx="1273.600" cy="112.600" r="2.500"/></g>
<path d="M1270 130h8.600v8.600h-8.600z" fill="#e0e0e0"/><path d="M1274.3 131.3v6M1271.3 134.3h6" stroke="#2f3745" stroke-width="1.200"/><path d="M1281.4 130h8.600v8.600h-8.600z" fill="#8ccbf8"/><path d="M1285.7 131.3v6M1282.7 134.3h6" stroke="#2f3745" stroke-width="1.200"/><path d="M1270 141.4h8.600v8.600h-8.600z" fill="#8ccbf8"/><path d="M1274.3 142.70000000000002v6M1271.3 145.70000000000002h6" stroke="#2f3745" stroke-width="1.200"/>
<rect x="1340" y="66.800" width="38" height="38" rx="8.500" fill="#c394f6"/><path d="M1344 70c4-3.400 24-3.400 30 0 3 2 3.400 6 3.400 8l-3.600 1.600c-1-3.600-5-6-14-6s-13.400 1.600-15.400 5L1341 77c.4-3 1-5.400 3-7z" fill="#d4aefa"/><path d="M1372.400 77.600l5-2.600v24c-.4 3-2.400 5-5 5.400z" fill="#b684ea"/><g fill="none" stroke="#a678dc" stroke-width=".9"><path d="M1356.600 73.400v31M1340.600 88.600h32M1372.400 79v25M1365 67.400c-.4 2-2.600 4.600-8.400 6M1372.600 88.600l5-2.400"/></g>
<path d="M1356.3 135.20000000000002h5.6l-2.8 3.2z" fill="#9aa4b8"/>
<path d="M1390.600 79.800c2-5 5.400-9 9.600-10.800l9 4.600c-3.600 2.400-6 6.800-7.600 13z" fill="#c394f6"/>
<path d="M1390 99.800h11v7.800h-5v4.200h-6z" fill="#f4b27f"/><path d="M1397.400 108.200h11.800V119h-11.800z" fill="#c394f6"/><path d="M1403.300 108.200V119M1397.400 113.600h11.800" stroke="#a678dc" stroke-width=".8"/><circle cx="1405.600" cy="103.600" r="4" fill="none" stroke="#3b4453" stroke-width="3.400"/><path d="M1402 105.400a4 4 0 0 1 5.400-5.400" fill="none" stroke="#3aa0f0" stroke-width="1.800"/><path d="M1409.200 101.800a4 4 0 0 1-5.400 5.400" fill="none" stroke="#ee4d5a" stroke-width="1.800"/>
<path d="M1463 67.800h19.300v19.600H1463z" fill="#f4b27f"/><path d="M1472.600 68.400v18.600M1470 72.600h5.200M1470 77.600h5.200M1470 82.600h5.200" stroke="#2f3745" stroke-width="1.100"/>
<path d="M1494 67.800c11 0 19.600 8 20 19.800h-9.400c-.4-6.400-4.600-10.600-10.600-10.800z" fill="#f4b27f"/><path d="M1499.600 77.800l3.600-8.400M1504 83.400l8-4.200" stroke="#d9956a" stroke-width=".9"/>
<path d="M1526.600 72.400c4.600-5.400 13.600-5.400 18.600 0" fill="none" stroke="#f4b27f" stroke-width="1.800"/><path d="M1528.600 73.600c3-2.600 11.600-2.600 14.600 0v9h-14.600z" fill="#8ccbf8"/><path d="M1528.600 84h14.600v3.600h-14.600z" fill="#dcdcdc"/><path d="M1535.900 81.800v-6" stroke="#fff" stroke-width="1.400"/><path d="M1532.900 77l3-3.600 3 3.600z" fill="#fff"/><path d="M1535.900 82.400v-6.400" stroke="#2f3745" stroke-width=".5"/>
<path d="M1463 98.800h19.600V119H1472v-9.400h-9z" fill="#f4b27f"/>
<path d="M1508 101.800h6v5.400h-6zM1494 108.600l4.600-4.400 4.400 4.400-4.400 4.400z" fill="#f4b27f"/><g fill="none" stroke="#fff" stroke-width="1.500"><path d="M1499.400 100.600l7.400 13M1508 101.400l-6 12.600"/><circle cx="1503.200" cy="115.800" r="2.100"/><circle cx="1509" cy="113.600" r="2.100"/></g>
<path d="M1526 101h15l5 4.400v10.200h-20z" fill="#dcdcdc"/><path d="M1541 101l5 4.400h-5z" fill="#f6f6f6"/><path d="M1529 104h14v9.600h-14z" fill="#8a8a8a"/><circle cx="1534" cy="109" r="4.600" fill="#f4b27f"/><path d="M1539.400 103.400l5.600 8.600h-11z" fill="#f4b27f" stroke="#8a8a8a" stroke-width=".5"/><path d="M1531.600 113h7.600v5.600h-7.600z" fill="#f4b27f"/>
<path d="M1470.600 130h11.700v11.200h-11.700z" fill="#f4b27f"/><circle cx="1470.600" cy="142" r="7.600" fill="#f4b27f"/><path d="M1470.600 142v-7.600a7.600 7.600 0 0 1 7.600 7.600z" fill="#8ccbf8" stroke="#3b4453" stroke-width=".6"/>
<path d="M1494 130h19.400v13.600H1494z" fill="#f4b27f"/><path d="M1494 145.400h19.400v4.200H1494z" fill="#dcdcdc"/><path d="M1503.700 143.400V135" stroke="#2f3745" stroke-width="2.600"/><path d="M1503.700 143.400V135" stroke="#fff" stroke-width="1.500"/><path d="M1500 136.600l3.700-4.800 3.700 4.800z" fill="#fff" stroke="#2f3745" stroke-width=".5"/>
<path d="M1526 130.200h12.400v10.600H1526z" fill="#ead27a"/><path d="M1526 133.400l12.400 1.400M1526 136.600l12.400-2.800" stroke="#cdb45c" stroke-width=".7"/><path d="M1533.600 138.200h12.600v11.600h-12.600z" fill="#f4b27f"/><path d="M1540.600 131.800h3.600v3.200M1542.400 133.600l1.800 2 1.800-2" fill="none" stroke="#e0e0e0" stroke-width="1.100"/>
<path d="M1600 80.400l9-10.400h14v9.200h12v17l-9 8.800h-26z" fill="#5b646f"/><g fill="#7ddc9c"><path d="M1602.400 82.800h9v9h-9zM1602.400 93.600h9v9h-9zM1613.200 93.600h9.600v9h-9.600z"/><path d="M1611 72.400h10.400l-5.400 6.400h-9.600z" fill="#6ccf8c"/><path d="M1617.600 84.600l7-4.400h8.400l-7.400 4.400z" fill="#8fe6ac"/></g><g fill="#52b874"><path d="M1613.400 80.800l7.600-6.800v7.800l-7.600 6.600zM1626.200 91.200l7-6.400v8l-7 6.400z"/></g><g fill="none" stroke="#cfd2d6" stroke-width="1.200"><path d="M1600 80.400l9-10.400h14v9.200h12v17l-9 8.800h-26zM1600 80.400h13.600v10h12.400v14.600M1613.600 80.400l9.400-10.400M1626 90.400l9-11.200"/></g>
<defs><radialGradient id="sg" cx="0" cy=".42" r="1.050" gradientUnits="objectBoundingBox"><stop offset="0" stop-color="#ff8a8a"/><stop offset=".16" stop-color="#fb8f86"/><stop offset=".22" stop-color="#f7b36b"/><stop offset=".36" stop-color="#f3cf6b"/><stop offset=".42" stop-color="#b7e07a"/><stop offset=".58" stop-color="#7fe09a"/><stop offset=".68" stop-color="#4fd3c4"/><stop offset=".9" stop-color="#3fb8f0"/></radialGradient></defs><path d="M1701 76.600l9.600-9.800h25.400v26.400l-9.600 9.200H1701z" fill="url(#sg)"/><path d="M1726.400 76l9.600-9.200v26.400l-9.600 9.200z" fill="#2fb4ea" opacity=".75"/><path d="M1710.600 66.800h25.400l-9.600 9.200" fill="#9fdcf2" opacity=".5"/><circle cx="1727.400" cy="101.400" r="6" fill="#6cbcf6"/><path d="M1731 99.800h5v-2.800l5.400 4.400-5.400 4.400V103h-5z" fill="#6cbcf6"/>
<path d="M1797.400 75c2-3 3.400-6 5.600-6 3.600 0 6 9 11 10.400 2.600.6 5-.6 7.400-1.400-2.400 3.600-5 9.600-9 9.600-4.600 0-6.600-10.600-11-12.600-1.400-.6-2.800-.4-4 0z" fill="#a9d7fb"/><path d="M1789.400 87.400c1-5 3.600-10.400 8-12.400l1.400 5.600z" fill="#5ba3dc"/><path d="M1789.400 87.400l9.400-6.800.6 6.600-10 12.200z" fill="#dcdcdc"/><path d="M1798.800 80.600l1.400-3 .2 8.800-1 .8z" fill="#9a9a9a"/><circle cx="1814" cy="98.800" r="5.800" fill="#6cbcf6"/><path d="M1817.600 97.200h5v-2.800l5.400 4.400-5.400 4.400v-2.800h-5z" fill="#6cbcf6"/>
<circle cx="1871.500" cy="76.500" r="9.700" fill="#dedede"/><path d="M1866 73.400h11l-5.500 7.400z" fill="#4a4f58"/>
<path d="M1889.2 76.0h5.6l-2.8 3.2z" fill="#9aa4b8"/>
<path d="M778.8 167.2h9.4l-4.7 5z" fill="#aeb7c8"/>
<path d="M1661.8 167.2h9.4l-4.7 5z" fill="#aeb7c8"/>
<path d="M47.600 188.600l8.400 8.800M56 188.600l-8.400 8.800" stroke="#e4e6ea" stroke-width="1.400"/>
<path d="M76 188v10.400M70.800 193.200h10.400" stroke="#c4c9d2" stroke-width="1.400"/>
<circle cx="189.600" cy="192.400" r="5.200" fill="none" stroke="#aab1bd" stroke-width="1.400"/><path d="M193.400 196.400l4.200 4.200" stroke="#aab1bd" stroke-width="1.600"/>
<path d="M209 188.200h14M209 193.200h14M209 198.200h14" stroke="#f0f1f3" stroke-width="1.900"/>
<path d="M10.500 230v7M10.500 250v243M30.500 255v7M30.500 274.500v13" stroke="#9aa2ae" stroke-width="1" stroke-dasharray="1 1.500" fill="none"/>
<path d="M17.500 243.500h4" stroke="#9aa2ae" stroke-width="1" stroke-dasharray="1 1.500" fill="none"/>
<path d="M17.500 318.500h4" stroke="#9aa2ae" stroke-width="1" stroke-dasharray="1 1.500" fill="none"/>
<path d="M17.500 343.500h4" stroke="#9aa2ae" stroke-width="1" stroke-dasharray="1 1.500" fill="none"/>
<path d="M17.500 368.500h4" stroke="#9aa2ae" stroke-width="1" stroke-dasharray="1 1.500" fill="none"/>
<path d="M17.500 393.500h4" stroke="#9aa2ae" stroke-width="1" stroke-dasharray="1 1.500" fill="none"/>
<path d="M17.500 443.500h4" stroke="#9aa2ae" stroke-width="1" stroke-dasharray="1 1.500" fill="none"/>
<path d="M17.500 468.500h4" stroke="#9aa2ae" stroke-width="1" stroke-dasharray="1 1.500" fill="none"/>
<path d="M37.500 268.500h4" stroke="#9aa2ae" stroke-width="1" stroke-dasharray="1 1.500" fill="none"/>
<path d="M37.500 293.500h4" stroke="#9aa2ae" stroke-width="1" stroke-dasharray="1 1.500" fill="none"/>
<path d="M11 418.500h11M11 493.500h11" stroke="#9aa2ae" stroke-width="1" stroke-dasharray="1 1.500" fill="none"/>
<path d="M5 243.200h10" stroke="#f4f4f6" stroke-width="2.600"/>
<path d="M25 268.2h10M30 263.2v10" stroke="#d0d4db" stroke-width="2"/>
<path d="M25 293.2h10M30 288.2v10" stroke="#d0d4db" stroke-width="2"/>
<path d="M5 318.2h10M10 313.2v10" stroke="#d0d4db" stroke-width="2"/>
<path d="M5 343.2h10M10 338.2v10" stroke="#d0d4db" stroke-width="2"/>
<path d="M5 368.2h10M10 363.2v10" stroke="#d0d4db" stroke-width="2"/>
<path d="M5 393.2h10M10 388.2v10" stroke="#d0d4db" stroke-width="2"/>
<path d="M5 443.2h10M10 438.2v10" stroke="#d0d4db" stroke-width="2"/>
<path d="M5 468.2h10M10 463.2v10" stroke="#d0d4db" stroke-width="2"/>
<path d="M3.800 221.400c.6-6 3.600-10.600 9.400-12.800l8.200 4.200c-4.600 2.400-7 6.800-7.800 13.600z" fill="#f4b183"/>
<path d="M22.800 233.6h7.600l2.600 3.400H43v14.400H22.800z" fill="#fbe8a6"/><path d="M22.800 237.2h20.200" stroke="#e2c878" stroke-width=".8"/><path d="M25.600 238.600h5.400v3h-5.400z" fill="#b9b9b9"/><path d="M27.600 241.600v6h4M27.600 244.400h6" stroke="#b0b0a8" stroke-width="1" fill="none"/><path d="M34.400 241.400h4.600v3.200h-4.600z" fill="#b9b9b9"/><path d="M33.400 246h5.800v3.600h-5.800z" fill="#3f9be0"/>
<path d="M43.200 266.400h3.600v3.600h-3.600z" fill="#d6d6d6"/><path d="M46.800 268.200h2.600M53.400 261.800h-4v12.400h4" stroke="#d6d6d6" stroke-width="1.300" fill="none"/><path d="M53.800 259.200h6.400v6h-6.400z" fill="#dcdcdc"/><circle cx="56.800" cy="274.300" r="3.500" fill="#6cbcf6"/>
<path d="M44.200 288.600v-4.400h5M55.800 284.200h5v4.400M60.800 296.200v4.400h-5M49.200 300.600h-5v-4.400" stroke="#4db1f5" stroke-width="1.400" fill="none"/><path d="M45.800 292.600c3.400-5 9.800-5 13.200 0-3.400 4.800-9.800 4.800-13.200 0z" fill="#dcdcdc"/><circle cx="52.400" cy="292.500" r="2.300" fill="#3f9be0"/>
<path d="M22.800 308.6h7.600l2.600 3.400H43v14.400H22.800z" fill="#fbe8a6"/><path d="M22.800 312.20000000000005h20.200" stroke="#e2c878" stroke-width=".8"/><path d="M26.400 322.200c.4-4.200 2.600-7.200 6.400-8.600l6.200 2.400c-3.200 1.600-5 4.600-5.600 8.800z" fill="#e2884a"/>
<path d="M22.800 333.6h7.600l2.600 3.400H43v14.400H22.800z" fill="#fbe8a6"/><path d="M22.800 337.20000000000005h20.200" stroke="#e2c878" stroke-width=".8"/><path d="M28.600 348.200v-9.600M28.600 348.200h9.600M28.600 348.200l7-7" stroke="#8a8a82" stroke-width="1.100" fill="none"/><path d="M27 340.200l1.600-2.800 1.600 2.800zM36.800 346.600l2.800 1.600-2.800 1.600z" fill="#8a8a82"/><path d="M27.400 347h2.600v2.600h-2.600z" fill="#3f9be0"/>
<path d="M24.200 358.800h16.400v16.400H24.200z" fill="none" stroke="#8d939d" stroke-width="1.200" stroke-dasharray="12.400 4"/><g fill="#8d939d"><path d="M23.200 357.800h2v2h-2zM39.600 357.800h2v2h-2zM23.200 374.200h2v2h-2zM39.600 374.200h2v2h-2z"/></g>
<path d="M28.400 383.600H43v14h-14.600z" fill="#5d6571" stroke="#d8d8d8" stroke-width="1.200"/><path d="M23.400 388H37.600v14H23.400z" fill="#717985" stroke="#e0e0e0" stroke-width="1.200"/><path d="M28.400 388H37.600v9.600h-9.200z" fill="#878e99"/>
<g stroke="#4db1f5" fill="none"><path d="M33.100 408.300v19" stroke-width="1.300"/><path d="M23 425.700h8.600" stroke-width="1.300"/><path d="M40.500 416.100l-7.400 4.400 7.400 5.200" stroke-width="1.400"/></g><g fill="#4db1f5"><circle cx="33.100" cy="420.500" r="2.400"/><circle cx="40.500" cy="416.100" r="2.400"/><circle cx="40.500" cy="425.700" r="2.400"/><path d="M31.800 424.400h2.600v2.600h-2.600z"/></g>
<path d="M23.600 433.3h19v19.400h-7.800c-2.200 0-3.200-1-3.200-3.200v-6.200H23.600z" fill="#79818c" stroke="#d6d6d6" stroke-width="1.100"/>
<path d="M23.600 458.3h19v19.400h-7.800c-2.200 0-3.200-1-3.200-3.200v-6.200H23.600z" fill="#79818c" stroke="#d6d6d6" stroke-width="1.100"/>
<path d="M28.600 484h7.600l5 5v7.600l-5 5h-7.600l-5-5V489z" fill="#f4585c"/><path d="M28.800 489.200l7.200 7.200M36 489.200l-7.200 7.200" stroke="#fff" stroke-width="2.200"/>
<path d="M1867.200 196.800h7.600" stroke="#f4f4f4" stroke-width="2.200"/><path d="M1887.500 187.800h10.800v9.600h-10.800zM1893.600 187.800v9.600M1893.600 192.200h4.700" fill="none" stroke="#f4f4f4" stroke-width="1.300"/><path d="M1907.600 188.200l9.400 9.200M1917 188.200l-9.400 9.200" stroke="#f4f4f4" stroke-width="1.500"/>
<defs><filter id="bl" x="-20%" y="-100%" width="140%" height="300%"><feGaussianBlur stdDeviation="2.200"/></filter></defs><ellipse cx="1858" cy="296.500" rx="36" ry="3.200" fill="#2e3a4c" opacity=".62" filter="url(#bl)"/><path d="M1831.800 240.600h52.400v52.400h-52.400z" fill="#a3aab4" stroke="#7d838d" stroke-width=".8"/><path d="M1841 249.800h33.800v34H1841z" fill="#979fab"/><text x="1839.600" y="272.700" font-family="Liberation Sans" font-weight="bold" font-size="15.500" fill="#7b8491" textLength="37.400" lengthAdjust="spacingAndGlyphs">FRONT</text>
<rect x="1885.200" y="326.200" width="40" height="229.300" rx="5" fill="rgba(255,255,255,.17)" stroke="#6b737e" stroke-width="1.500"/><circle cx="1911" cy="333.200" r="3.300" fill="#767d88"/><path d="M1909.600 331.800l2.800 2.800M1912.400 331.800l-2.800 2.800" stroke="#c9ced5" stroke-width=".9"/><circle cx="1911" cy="547.600" r="3.300" fill="#767d88"/><path d="M1909.200 546.600h3.600M1909.600 548.400h2.800" stroke="#c9ced5" stroke-width=".9"/><path d="M1889 387.500h26" stroke="#767e89" stroke-width="1"/>
<path d="M1891.400 358.500c0-6.400 4.400-10.600 11-10.600h6.200c2.600 0 4 1.400 4 4v6.600c0 6.400-4.400 10.600-11 10.600-5.800 0-10.200-4.200-10.200-10.600z" fill="#b4bac3" stroke="#69717c" stroke-width="1.200"/><circle cx="1902.400" cy="358.500" r="5.800" fill="#bcc2ca" stroke="#69717c" stroke-width="1.200"/><path d="M1897.600 362.400l-3.200 3.400M1907 362.400l3.200 3.400" stroke="#69717c" stroke-width="1"/>
<path d="M1899.1 380.0h5l-2.5 2.8z" fill="#69717c"/>
<path d="M1899.1 457.8h5l-2.5 2.8z" fill="#69717c"/>
<path d="M1899.1 499.6h5l-2.5 2.8z" fill="#69717c"/>
<path d="M1894.600 409.200l-3.400-5.200c-.8-1.400.8-2.600 2-1.400l3 3.200-1-8.200c-.2-1.800 2-2.200 2.400-.4l1.400 6.400.2-8c0-1.800 2.400-1.800 2.600 0l.4 8 1.600-7c.4-1.800 2.600-1.200 2.400.4l-.8 7.600 2.200-4.800c.8-1.600 2.800-.6 2.200 1l-2.400 7.200c-1 3.400-2.400 6-4.800 7.400h-5c-1.600-1.400-2.200-3.800-3-6.200z" fill="#b4bac3" stroke="#69717c" stroke-width="1.100"/>
<path d="M1891.600 426.200h9.800l4 4v14h-13.800z" fill="#b4bac3" stroke="#69717c" stroke-width="1.100"/><path d="M1901.400 426.200v4h4" fill="none" stroke="#69717c" stroke-width="1"/><circle cx="1905.200" cy="440.400" r="4.200" fill="#c9ced5" stroke="#69717c" stroke-width="1.300"/><path d="M1908.400 443.600l4.400 4.200" stroke="#69717c" stroke-width="2"/>
<ellipse cx="1901.600" cy="480.100" rx="10.600" ry="4" fill="none" stroke="#69717c" stroke-width="1.200"/><ellipse cx="1901.600" cy="480.100" rx="4" ry="10.600" fill="none" stroke="#69717c" stroke-width="1.200"/><path d="M1900 480.100h3.200M1901.600 478.500v3.200" stroke="#69717c" stroke-width="1"/><path d="M1903.600 470.800l2.200 2.400 1.200-3zM1908.600 484.600l2.800-1.600-2.600-1.600z" fill="#69717c"/>
<path d="M1890.400 516.600h22.400v16h-22.400z" fill="#b4bac3" stroke="#69717c" stroke-width="1.200"/><path d="M1890.400 516.600l5.600-5.400v5.400M1901 516.600l5.800-4.400v4.400" fill="none" stroke="#69717c" stroke-width="1.100"/><path d="M1894.400 521.600h14.400v6h-14.400z" fill="#a2a9b3" stroke="#69717c" stroke-width="1"/>
<path d="M283 907.500h-20" stroke="#9b0000" stroke-width="1.400"/><path d="M254.200 907.500l7.400-4.200v8.400z" fill="#7e0000"/><path d="M282.600 908v24" stroke="#0000a8" stroke-width="1.400"/><path d="M276.800 927.200h11.400l-5.700 9.400z" fill="#00008c"/><circle cx="282.600" cy="907.300" r="5.200" fill="#0e8a0e"/><path d="M243.200 903.600l6.200 7.800M249.400 903.600l-6.200 7.800" stroke="#ff3b3b" stroke-width="1.400"/><path d="M279.400 939.800h6.200l-6.200 7.600h6.400" stroke="#3a3aff" stroke-width="1.400" fill="none"/>
<path d="M236.600 975.800l9.800-9.200 3.600 3.400v-2.400h2.400v4.600l3.800 3.600-1.400 1.400-8.400-7.800-8.400 7.800z" fill="#dcdcdc"/><path d="M239.400 976.800l7-6.600 7 6.600v8.600h-14z" fill="#dcdcdc"/><path d="M244 978.400h4.800v7h-4.800z" fill="#464e62"/><path d="M244.800 979.200h3.200v6.200h-3.200z" fill="#cfcfcf"/><path d="M244.800 982.400h1.400v1.400h-1.400z" fill="#464e62"/>
<path d="M377 969.200l8.600 8.600M385.600 969.200l-8.600 8.600" stroke="#d4d8de" stroke-width="1.500"/>
<path d="M1896 968.600h18M1896 975h18M1896 981.500h18" stroke="#b4bcc8" stroke-width="2.200"/>
</svg>
<svg style="left:0;top:0" width="1918" height="1018" viewBox="0 0 1918 1018" fill="none" stroke="#0a0a0a" stroke-linecap="round" stroke-linejoin="round">
<path stroke-width="2.2" d="M367.5 519.4L466.5 473.0M1412.8 661.5L1428.3 712.9"/>
<path stroke-width="1.76" d="M370.0 520.9L467.7 475.0M378.1 525.6L468.2 476.0M367.5 519.4L378.1 525.6M830.0 594.2L867.6 580.2L982.8 527.6M1015.4 537.1L1027.9 531.4M1530.6 721.9L1520.7 721.9M1525.1 734.7L1515.3 726.8M1508.0 742.0L1503.5 730.2M1278.4 573.0C1295.2 573.1 1312.0 573.1 1328.8 573.2C1340.2 573.3 1351.5 573.0 1362.8 573.5C1369.7 573.8 1376.6 574.4 1383.5 574.9M1278.4 573.0C1290.8 575.0 1303.2 577.4 1315.6 579.1C1323.3 580.2 1331.0 581.0 1338.7 582.0C1351.1 583.4 1363.6 584.7 1376.0 586.2C1382.6 587.0 1389.2 587.8 1395.8 588.6M1326.0 557.4C1326.6 560.1 1327.4 562.8 1327.9 565.5C1328.3 568.0 1328.0 570.8 1328.8 573.2C1329.3 574.6 1329.9 576.1 1330.7 577.2C1332.5 579.7 1336.9 579.7 1338.7 582.0C1340.7 584.3 1341.3 587.9 1342.0 590.9C1342.9 594.3 1343.4 597.8 1343.5 601.3C1343.5 605.4 1343.0 609.6 1342.0 613.6C1341.3 616.4 1340.9 619.7 1339.2 622.0C1338.2 623.5 1336.7 624.6 1335.4 625.8M1357.1 556.8C1357.8 559.7 1358.1 562.7 1359.0 565.5C1360.0 568.2 1361.3 570.9 1362.8 573.5C1364.4 576.3 1366.1 579.3 1368.4 581.5C1370.6 583.5 1374.1 584.1 1376.0 586.2C1377.9 588.4 1378.7 591.8 1379.8 594.7C1381.1 598.3 1381.8 602.2 1382.6 606.0C1383.2 609.1 1383.9 612.3 1384.0 615.4C1384.1 617.9 1383.7 620.5 1383.5 623.0M1374.6 552.7C1376.0 555.7 1377.5 558.6 1378.8 561.7C1380.6 566.0 1381.8 570.6 1383.5 574.9C1384.6 577.4 1385.7 579.9 1386.8 582.4M1395.8 588.6L1406.2 621.6M1280.7 637.9C1292.4 634.9 1303.9 631.2 1315.6 629.0C1322.5 627.6 1329.4 626.6 1336.4 625.7C1351.7 623.6 1367.2 622.5 1382.6 621.9C1390.4 621.6 1398.3 621.6 1406.2 621.4M1280.7 637.9C1295.5 636.3 1310.3 634.5 1325.1 633.2C1342.0 631.7 1359.0 630.5 1376.0 629.9C1384.5 629.6 1393.0 629.6 1401.4 629.4M1325.1 633.2C1324.1 638.2 1323.2 643.3 1322.2 648.3C1321.3 653.3 1320.3 658.3 1319.4 663.4M1376.0 625.7C1376.0 627.1 1375.9 628.5 1376.0 629.9C1376.1 634.5 1377.2 639.0 1377.9 643.6C1378.6 648.6 1379.4 653.6 1380.2 658.7M1401.4 629.4C1403.0 634.1 1404.5 638.9 1406.2 643.6C1407.6 647.7 1409.3 651.7 1410.9 655.8M1401.4 629.4L1407.1 621.4M1337.3 667.1C1338.1 669.7 1339.4 672.2 1339.7 674.7C1340.0 678.4 1338.4 682.3 1337.3 686.0C1336.1 690.2 1334.5 694.3 1332.6 698.3C1330.5 702.6 1327.6 706.4 1325.1 710.5M1398.6 664.3C1399.9 667.8 1401.7 671.1 1402.4 674.7C1403.0 678.3 1402.8 682.3 1402.4 686.0C1402.0 689.2 1401.5 692.4 1400.5 695.4C1399.6 698.2 1398.0 700.8 1396.7 703.5M1225.0 720.9C1255.6 718.3 1286.3 716.5 1316.8 713.3C1343.7 710.5 1370.4 705.8 1397.3 703.3C1404.4 702.6 1411.5 702.0 1418.6 701.4M1225.0 721.2C1244.3 720.6 1263.6 720.5 1282.9 719.2C1294.2 718.5 1305.5 717.3 1316.8 716.5C1335.7 715.0 1354.5 713.3 1373.4 712.7C1391.4 712.1 1409.4 712.7 1427.4 712.7M1416.1 680.0L1428.7 706.4L1427.4 712.7"/>
<path stroke-width="1.98" d="M387.6 542.7L408.9 529.6L481.5 484.5M466.5 473.0C471.5 476.9 476.1 481.3 481.5 484.5C486.6 487.6 492.3 489.6 497.8 492.1C504.0 494.8 510.4 497.3 516.6 500.1C524.6 503.7 532.4 507.7 540.4 511.4C547.9 514.8 555.4 518.1 562.9 521.4C575.3 526.7 587.5 533.1 600.5 536.4C608.7 538.5 617.2 539.5 625.6 540.7C637.0 542.2 648.6 543.0 660.1 543.9C672.8 544.9 685.5 546.1 698.2 546.4C707.4 546.7 716.6 546.5 725.8 546.4C742.5 546.2 759.2 545.6 775.9 544.7C793.9 543.7 811.9 542.0 830.0 540.7M516.6 500.1L516.6 511.4M600.5 536.4C601.2 538.5 602.1 540.5 602.5 542.7C602.8 544.3 602.8 546.0 603.0 547.7M660.1 543.9L660.1 556.4M698.2 546.4L698.2 558.4M367.5 519.4C366.9 520.9 365.8 522.4 365.5 523.9C364.9 527.1 367.2 530.9 368.8 533.9C371.4 538.7 376.6 542.0 380.6 545.9C384.1 549.5 388.1 552.6 391.3 556.4C393.6 559.2 395.8 562.1 397.6 565.2C400.6 570.6 402.0 576.8 403.9 582.7C405.4 587.7 406.8 592.7 408.1 597.8C409.2 601.9 410.7 606.1 411.4 610.3C411.9 613.6 412.1 617.0 412.1 620.3C412.2 624.5 411.9 628.7 411.4 632.8C410.7 637.9 409.1 642.9 408.1 647.9C406.8 654.1 405.7 660.4 404.6 666.7C403.9 670.4 403.2 674.2 402.6 677.9C402.1 681.4 401.6 684.9 401.4 688.5C401.1 691.6 400.5 694.9 400.9 698.0C401.2 700.9 401.4 704.5 403.1 706.7C404.6 708.6 407.3 709.9 409.6 710.8C411.7 711.5 414.1 711.6 416.4 712.0M378.1 525.6C379.6 528.8 380.8 532.1 382.6 535.2C384.1 537.8 386.0 540.1 387.6 542.7C390.7 547.6 393.1 552.9 396.3 557.7C398.7 561.1 401.5 564.3 403.9 567.7C407.1 572.5 410.2 577.5 412.6 582.7C414.9 587.6 416.7 592.6 418.1 597.8C419.3 601.9 420.2 606.1 420.6 610.3C421.1 614.4 421.1 618.7 420.9 622.8C420.6 627.9 419.9 632.9 418.9 637.9C417.7 643.8 415.7 649.6 413.9 655.4C412.1 661.3 409.9 667.0 408.1 672.9C406.6 678.1 405.3 683.3 403.9 688.5M408.9 529.6C412.6 532.3 416.9 534.5 420.1 537.7C424.4 541.8 427.0 547.6 430.2 552.7C433.7 558.4 437.1 564.2 440.2 570.2C443.5 576.7 445.8 583.7 448.9 590.3C451.0 594.5 452.2 599.3 455.2 602.8C457.0 604.9 459.1 607.1 461.5 608.3C464.4 609.7 468.1 609.4 471.5 609.8C477.7 610.6 484.2 610.2 490.3 611.6C498.1 613.3 506.0 616.2 512.8 620.3C518.3 623.7 523.8 627.9 527.9 632.8C530.9 636.6 534.0 640.8 535.4 645.4C536.6 649.3 536.7 653.7 536.6 657.9C536.5 662.9 535.8 668.2 534.1 672.9C532.2 678.3 527.8 682.7 525.4 688.0C523.4 692.0 520.9 696.2 520.3 700.5C519.8 704.5 521.2 708.8 521.6 713.0M403.9 582.7C406.8 582.1 409.7 581.5 412.6 580.7C422.1 578.2 431.0 573.6 440.2 570.2C459.7 563.0 479.1 555.5 499.0 549.7C511.0 546.1 523.1 542.8 535.4 540.2C544.5 538.2 553.7 536.8 562.9 535.2M412.1 613.3C414.8 612.3 417.5 611.3 420.1 610.3C455.5 597.4 493.6 594.0 530.4 585.8C573.6 576.1 616.9 566.2 660.1 556.4M410.1 622.8C430.6 618.5 451.0 613.9 471.5 609.8C502.3 603.6 533.2 598.0 564.2 592.8C613.7 584.4 663.5 578.0 713.2 570.7C752.1 565.0 791.0 559.4 830.0 553.7M412.1 630.3C419.0 629.2 425.8 627.9 432.7 626.8C463.3 622.2 494.5 622.5 525.4 620.3C558.7 618.0 592.1 615.7 625.6 613.6C664.0 611.1 702.4 608.5 740.8 606.5C770.5 605.0 800.2 604.0 830.0 602.8M404.6 666.7C419.8 666.7 435.0 667.0 450.2 666.7C479.0 666.1 507.9 664.1 536.6 661.7C566.3 659.1 595.9 654.8 625.6 651.6C665.6 647.4 705.7 643.9 745.8 639.9C773.9 637.0 801.9 634.0 830.0 631.1M660.1 556.4C668.6 557.9 677.5 558.2 685.7 560.7C695.3 563.6 705.0 568.1 713.2 574.0C719.7 578.5 725.8 584.1 730.8 590.3C734.7 595.2 738.2 600.8 740.8 606.5C743.1 611.7 745.0 617.3 745.8 622.8C746.6 628.4 745.9 634.2 745.8 639.9C745.6 646.7 744.9 653.6 744.5 660.4C744.3 665.8 743.6 671.3 743.8 676.7C744.0 682.1 744.3 687.8 745.8 693.0C747.6 699.0 751.6 704.3 754.6 710.0M401.4 700.5C441.9 698.0 482.4 695.6 522.8 693.0C596.5 688.1 670.1 682.2 743.8 676.7C772.5 674.5 801.2 672.3 830.0 670.2M804.7 603.5L830.0 594.0M561.7 712.0C602.2 716.6 642.8 719.9 683.2 725.8C703.1 728.6 722.9 732.4 742.8 735.3C771.8 739.4 800.9 742.3 830.0 745.8M754.6 709.7L742.8 735.3M830.0 540.6C855.1 536.7 880.2 533.1 905.2 528.8C931.5 524.4 957.8 519.2 984.1 514.3M984.1 514.3L982.8 526.8M858.8 547.6C859.2 552.6 859.0 557.8 860.1 562.7C861.5 568.8 864.3 574.8 867.6 580.2C870.4 584.7 873.8 589.0 877.6 592.7C880.8 595.8 884.6 598.2 888.1 601.0M830.0 602.7C849.4 602.2 868.8 601.9 888.1 601.0C913.4 599.8 938.7 597.8 964.0 595.7C993.9 593.3 1023.8 590.3 1053.7 587.2C1074.8 585.0 1095.8 582.3 1116.8 580.2C1146.0 577.3 1175.4 576.8 1204.5 573.2C1229.2 570.2 1253.6 564.2 1278.4 561.4C1294.2 559.6 1310.1 558.1 1326.0 557.4C1336.4 556.9 1346.9 558.4 1357.1 556.8C1363.0 555.8 1368.8 554.0 1374.6 552.5C1383.7 550.1 1392.7 547.3 1401.7 544.7M984.1 514.3C991.2 516.7 998.4 518.7 1005.4 521.3C1013.0 524.3 1020.6 527.5 1027.9 531.4C1034.4 534.7 1040.2 539.3 1046.7 542.6C1048.7 543.7 1050.8 544.8 1052.9 545.6C1061.5 549.2 1071.3 549.1 1080.5 550.1C1090.1 551.3 1099.7 551.8 1109.3 552.1C1120.6 552.6 1131.9 552.6 1143.1 552.1C1159.9 551.5 1176.5 548.8 1193.2 547.1C1218.3 544.7 1243.4 543.2 1268.4 540.1C1282.3 538.4 1296.1 536.1 1310.0 534.3C1327.3 532.0 1344.6 529.8 1362.0 527.8C1380.5 525.7 1399.1 523.9 1417.6 521.9M982.8 526.8C989.5 527.3 996.3 526.8 1002.8 528.1C1008.8 529.3 1014.5 531.9 1020.4 533.9C1029.2 536.8 1037.9 539.7 1046.7 542.6M1010.4 531.4C1012.0 533.3 1013.6 535.3 1015.4 537.1C1023.6 545.5 1036.2 548.3 1046.7 553.9M1052.9 545.6L1046.7 553.9M1046.7 553.9C1058.0 557.2 1069.0 561.5 1080.5 563.9C1091.3 566.2 1102.5 567.6 1113.6 568.2C1127.5 568.9 1141.7 567.4 1155.7 566.4C1172.0 565.3 1188.2 563.0 1204.5 561.4C1230.0 558.9 1255.5 557.1 1280.9 554.4C1295.9 552.8 1311.0 550.9 1326.0 549.2C1341.1 547.5 1356.2 546.1 1371.3 544.2C1388.4 542.0 1405.7 540.1 1422.6 536.7C1428.2 535.6 1433.7 534.2 1439.3 533.0M964.0 595.7C964.9 605.4 965.4 615.1 966.5 624.8C968.1 638.8 971.6 652.6 972.8 666.6C973.8 678.7 973.6 690.8 974.0 702.9M974.0 703.9C972.8 707.6 971.0 711.3 970.3 715.2C969.5 719.6 969.5 724.5 970.3 728.9C971.1 733.7 972.9 738.5 975.3 742.7C977.6 746.8 981.1 750.2 984.1 754.0M1046.7 553.9C1049.0 565.0 1050.9 576.2 1053.7 587.2C1057.0 600.1 1062.6 612.4 1065.5 625.3C1069.2 641.6 1069.6 658.7 1071.7 675.4C1072.8 683.7 1073.9 692.1 1075.0 700.4M1075.0 700.1C1076.2 705.0 1076.7 710.0 1078.5 714.6C1080.2 719.2 1083.6 723.2 1085.5 727.7C1087.0 731.1 1088.6 734.6 1089.3 738.2C1090.1 742.5 1089.3 747.0 1089.3 751.5M1109.3 552.1C1110.7 557.5 1112.1 562.8 1113.6 568.2C1114.6 572.2 1115.7 576.2 1116.8 580.2C1120.4 593.2 1125.2 605.9 1128.1 619.0C1131.7 635.4 1133.0 652.4 1135.1 669.1C1136.3 678.7 1137.4 688.3 1138.6 697.9M1193.2 547.1L1204.5 561.4M1204.5 561.4C1204.5 565.3 1204.5 569.3 1204.5 573.2C1204.5 583.0 1204.0 592.9 1204.0 602.7C1204.0 622.4 1205.5 642.0 1205.8 661.6C1205.9 672.5 1205.8 683.3 1205.8 694.2M1205.8 694.2L1213.3 702.9L1225.3 721.0M1268.4 540.1L1280.9 554.4M1280.9 554.4C1280.7 556.7 1280.4 559.1 1280.2 561.4C1279.7 565.2 1278.8 568.9 1278.4 572.7C1277.7 578.9 1277.8 585.2 1277.9 591.5C1278.0 602.3 1279.9 613.2 1280.2 624.0C1280.2 628.6 1280.5 633.3 1280.2 637.8C1279.6 645.0 1278.2 652.3 1275.9 659.1C1271.9 671.0 1263.7 681.8 1255.9 691.7C1247.1 702.6 1235.5 711.2 1225.3 721.0M830.0 631.6C875.5 629.3 921.0 625.6 966.5 624.8C999.5 624.2 1032.6 627.2 1065.5 625.3C1086.4 624.1 1107.4 622.2 1128.1 619.0C1153.6 615.2 1178.6 607.6 1204.0 602.7C1215.4 600.5 1226.8 598.3 1238.3 596.5C1251.5 594.4 1264.7 593.1 1277.9 591.5M830.0 670.1C859.2 668.6 888.4 665.9 917.7 665.6C936.0 665.3 954.4 665.5 972.8 666.3C1005.9 667.7 1038.6 675.3 1071.7 675.8C1078.8 675.9 1086.0 676.2 1093.0 675.8C1107.2 675.1 1121.1 671.6 1135.1 669.6C1152.0 667.1 1168.7 662.7 1185.7 662.0C1192.4 661.8 1199.1 661.8 1205.8 662.0C1216.6 662.4 1227.5 664.0 1238.3 665.1C1250.4 666.2 1262.5 668.8 1274.6 668.8C1286.4 668.8 1298.2 666.3 1310.0 665.1M830.0 708.9C878.0 707.2 926.0 705.6 974.0 703.9C1007.7 702.7 1041.3 701.4 1075.0 700.1C1096.2 699.3 1117.4 698.5 1138.6 697.6C1161.0 696.7 1183.4 695.4 1205.8 694.6C1214.5 694.3 1223.3 694.3 1232.1 693.9C1240.4 693.4 1248.8 692.7 1257.1 692.1M1205.8 694.6C1201.6 697.3 1197.6 700.3 1193.2 702.6C1181.1 709.2 1166.6 711.2 1153.1 714.6C1130.9 720.4 1107.8 722.3 1085.5 727.7C1070.8 731.2 1056.2 735.3 1041.7 739.7C1027.8 743.9 1014.6 751.5 1000.3 753.2C995.0 753.9 989.5 753.7 984.1 754.0M1225.3 720.7C1211.7 723.4 1197.8 725.3 1184.5 728.9C1164.2 734.5 1145.2 744.3 1125.6 752.0M830.0 745.7C837.9 746.4 845.9 747.0 853.8 747.7C870.9 749.2 888.0 751.2 905.2 752.2C919.3 753.1 933.5 753.7 947.7 754.0C959.8 754.2 972.0 754.0 984.1 754.0M984.1 754.0C989.5 753.7 994.9 753.4 1000.3 753.2C1014.5 752.8 1028.7 754.2 1042.9 754.0C1058.4 753.7 1073.8 751.7 1089.3 751.5C1101.4 751.3 1113.5 751.8 1125.6 752.0C1144.0 752.2 1162.3 752.4 1180.7 752.7C1197.4 753.1 1214.1 753.7 1230.8 754.0C1257.2 754.4 1283.6 754.0 1310.0 754.0M1739.1 423.2L1700.9 463.9L1663.8 503.8M1663.8 503.7L1638.8 534.2L1608.7 570.1L1587.0 596.0L1572.0 614.4L1552.0 639.9L1542.0 655.3M1542 655.3L1541.8 654.7M1541.8 654.7C1538.9 659.9 1535.8 665.0 1533.1 670.3C1530.9 674.4 1527.5 678.4 1526.8 682.8C1526.2 686.8 1528.1 691.1 1528.6 695.3C1529.5 704.0 1530.9 713.1 1529.3 721.6C1528.5 725.8 1528.4 731.2 1525.6 734.1C1524.0 735.8 1521.5 736.8 1519.3 737.9C1515.8 739.6 1511.9 740.9 1508.0 741.7C1504.3 742.4 1500.5 742.4 1496.7 742.4C1492.6 742.4 1488.4 741.8 1484.2 741.7C1469.6 741.3 1455.0 744.5 1440.4 745.9C1418.7 747.9 1397.0 750.4 1375.3 751.7C1355.2 752.9 1335.2 753.3 1315.1 753.7C1293.4 754.1 1271.7 754.0 1250.0 754.2M1631.6 407.3C1646.7 405.4 1661.8 403.4 1676.9 401.5C1690.2 399.9 1703.6 398.8 1716.9 396.8C1723.2 395.8 1729.6 395.2 1735.8 393.7C1737.5 393.2 1739.2 392.5 1741.0 392.3C1743.6 391.8 1746.4 391.7 1749.0 392.3C1751.3 392.8 1754.2 393.5 1755.6 395.1C1757.0 396.8 1757.2 400.3 1757.0 402.6C1756.6 407.5 1750.6 411.1 1747.1 415.1C1744.6 417.9 1741.8 420.5 1739.1 423.2M1638.7 429.5C1653.4 425.7 1668.2 422.0 1683.0 418.2C1693.0 415.6 1702.9 412.0 1713.2 410.2C1717.8 409.4 1722.6 408.9 1727.3 408.3M1649.0 459.2C1656.3 456.1 1663.8 453.4 1670.7 449.8C1677.6 446.2 1684.2 441.9 1690.5 437.5C1698.4 432.1 1705.6 425.6 1713.2 419.6C1717.9 415.8 1722.6 412.1 1727.3 408.3M1676.9 401.5L1683.0 418.2L1690.5 437.5L1700.9 463.9M1394.2 436.4C1406.7 434.7 1419.2 433.0 1431.8 431.4C1445.4 429.7 1459.1 428.5 1472.7 426.7C1482.4 425.5 1492.1 423.9 1501.9 422.6C1515.2 420.7 1528.6 418.6 1542.0 417.1C1553.3 415.7 1564.8 414.9 1576.2 413.7C1594.6 411.8 1612.9 409.6 1631.3 407.5M1394.2 436.4C1391.7 436.8 1388.1 436.0 1386.7 437.6C1385.6 438.8 1385.6 441.5 1385.5 443.4C1385.4 445.9 1385.4 449.0 1386.7 450.9C1388.0 452.9 1391.1 453.7 1393.4 455.1M1393.4 455.1C1401.2 459.4 1409.2 463.3 1416.7 468.0C1423.6 472.3 1430.9 476.3 1436.8 481.8C1440.1 484.9 1443.9 487.9 1446.0 491.8C1447.3 494.3 1448.7 497.1 1448.8 499.9C1448.9 502.2 1448.1 504.7 1447.1 506.9C1446.1 509.0 1444.4 511.1 1442.6 512.7C1440.1 515.0 1436.6 516.4 1433.4 517.7C1428.5 519.9 1422.9 520.5 1417.6 521.9M1394.2 436.4C1404.5 442.7 1414.9 448.8 1425.1 455.1C1434.3 460.9 1444.1 466.0 1452.6 472.6C1459.4 477.9 1466.6 483.1 1471.8 489.8C1474.3 493.1 1476.5 496.6 1478.5 500.2C1480.0 502.8 1481.3 505.5 1482.7 508.2M1416.7 468.0L1425.1 455.1M1436.8 481.8L1452.6 472.6M1448.8 499.9L1471.8 489.8M1448.8 499.9L1482.7 508.2M1482.7 508.2C1487.4 506.9 1492.1 505.1 1496.9 504.4C1503.2 503.4 1509.7 504.4 1516.1 504.4C1526.4 504.4 1536.7 504.4 1547.0 504.4C1558.1 504.4 1569.2 504.4 1580.4 504.4C1592.3 504.3 1604.3 504.1 1616.2 504.0C1632.1 503.9 1648.0 503.9 1663.8 503.9M1425.1 455.1C1432.6 453.0 1440.0 450.6 1447.6 448.8C1459.1 446.1 1470.9 444.1 1482.7 442.9C1492.4 441.9 1502.2 442.0 1511.9 441.4C1525.0 440.7 1538.1 440.2 1551.1 438.8C1562.6 437.5 1573.9 435.1 1585.4 433.7C1603.1 431.7 1621.0 431.1 1638.8 429.7M1465.2 480.5C1469.1 480.2 1473.0 480.0 1476.8 479.5C1484.4 478.5 1491.8 475.7 1499.4 474.8C1509.3 473.7 1519.4 475.4 1529.4 475.2C1541.7 474.9 1553.9 473.3 1566.2 472.6C1578.1 472.0 1590.2 472.6 1602.1 471.0C1618.5 468.8 1634.3 462.6 1650.5 458.5M1431.8 431.4L1447.6 448.8L1473.5 480.5L1496.9 504.4M1472.7 426.7L1482.7 442.9L1499.4 474.8L1516.1 504.4M1501.9 422.6L1511.9 441.4L1529.4 475.2L1547.0 504.4M1542.0 417.1L1551.1 438.8L1566.2 472.6L1580.4 504.4M1576.2 413.7L1585.4 433.7L1602.1 471.0L1616.2 504.0M1631.3 407.5L1638.8 429.7L1649.1 458.8L1663.8 503.9M1482.7 508.0C1478.8 512.0 1474.8 516.0 1471.0 520.0C1467.6 523.6 1464.2 527.2 1461.0 530.9C1458.4 533.9 1456.2 537.2 1453.5 540.1C1450.4 543.4 1447.0 546.5 1443.5 549.2C1439.3 552.4 1434.7 555.2 1430.1 557.6C1421.3 562.2 1411.2 564.5 1401.7 567.6C1395.6 569.6 1389.5 571.5 1383.4 573.5M1496.9 504.7C1493.8 511.5 1490.6 518.2 1487.7 525.0C1485.7 529.7 1484.0 534.6 1481.9 539.2C1480.3 542.6 1477.8 545.7 1476.8 549.2C1476.3 551.4 1476.7 553.8 1476.0 555.9C1475.2 558.4 1473.4 560.6 1471.8 562.6C1467.3 568.3 1459.3 570.6 1453.5 575.1C1447.6 579.7 1442.1 584.9 1436.8 590.2C1430.9 596.0 1425.5 602.3 1420.1 608.5C1414.6 614.8 1409.5 621.3 1404.2 627.7M1516.1 504.7C1515.0 513.7 1513.7 522.7 1512.7 531.7C1512.1 537.3 1511.7 542.9 1511.1 548.4C1510.5 553.1 1511.1 558.4 1509.4 562.6C1507.2 568.0 1501.0 571.5 1496.9 576.0C1491.8 581.5 1487.2 587.4 1481.9 592.7C1476.4 598.0 1470.1 602.6 1464.3 607.7C1446.6 623.0 1429.3 638.8 1411.7 654.4M1547.0 504.7C1545.3 515.4 1543.6 526.0 1542.0 536.7C1541.1 542.3 1540.2 547.8 1539.4 553.4C1538.5 560.1 1539.4 567.4 1536.9 573.5C1534.5 579.7 1528.8 584.7 1524.4 590.2C1518.9 597.1 1512.1 603.0 1506.9 610.2C1502.9 615.7 1499.7 621.9 1496.0 627.7C1486.8 642.1 1476.6 655.9 1466.8 669.9M1580.4 504.7C1577.6 515.8 1574.1 526.8 1572.0 538.1C1570.6 545.9 1570.3 554.0 1568.7 561.8C1567.0 570.0 1566.0 578.9 1562.0 586.0C1558.6 592.0 1552.2 596.3 1547.8 601.8C1541.6 609.7 1537.0 618.8 1531.1 626.9C1527.4 632.0 1523.4 637.0 1519.4 641.9C1511.7 651.5 1503.3 660.6 1495.2 669.9M1616.2 504.7C1612.3 515.1 1608.4 525.5 1604.6 535.9C1600.3 547.3 1595.1 558.4 1592.0 570.1C1589.8 578.6 1588.7 587.4 1587.0 596.0M1448.8 500.0C1451.5 502.5 1454.0 505.2 1456.8 507.5C1460.7 510.7 1465.0 513.3 1469.3 515.9C1475.2 519.3 1481.4 522.6 1487.7 525.0C1495.7 528.2 1504.3 529.9 1512.7 531.7C1522.4 533.9 1532.1 535.7 1542.0 536.7C1551.9 537.8 1562.0 538.2 1572.0 538.1C1582.9 538.0 1593.7 536.5 1604.6 535.9C1616.0 535.2 1627.4 534.8 1638.8 534.2M1442.6 512.5C1445.4 516.9 1447.1 522.4 1451.0 525.5C1453.8 527.8 1457.6 529.0 1461.0 530.6C1467.5 533.5 1474.3 535.6 1481.0 538.1C1491.0 541.7 1500.8 545.8 1511.1 548.4C1520.3 550.8 1530.1 551.3 1539.4 553.4C1549.3 555.7 1559.0 558.6 1568.7 561.8C1576.5 564.3 1584.0 569.0 1592.0 570.1C1597.5 570.9 1603.2 570.1 1608.7 570.1M1417.6 521.7C1424.8 525.5 1431.7 530.0 1439.3 533.1C1444.4 535.2 1450.0 536.4 1455.1 538.4C1462.6 541.3 1469.6 545.4 1476.8 548.7C1487.3 553.5 1497.9 557.9 1508.6 562.3C1518.0 566.1 1527.7 569.3 1536.9 573.5C1545.5 577.3 1553.5 582.2 1562.0 586.0C1570.2 589.6 1578.7 592.7 1587.0 596.0M1422.6 537.7C1429.5 541.3 1436.5 544.8 1443.5 548.4C1452.6 553.1 1461.8 557.9 1471.0 562.6C1479.6 567.1 1488.3 571.5 1496.9 576.0C1506.1 580.7 1515.2 585.5 1524.4 590.2C1532.2 594.1 1540.0 597.9 1547.8 601.8C1555.9 606.0 1563.9 610.2 1572.0 614.4M1401.7 544.7C1411.2 549.0 1421.2 552.3 1430.1 557.6C1438.4 562.6 1445.5 569.6 1453.5 575.1C1462.6 581.4 1472.6 586.5 1481.9 592.7C1490.4 598.3 1498.5 604.4 1506.9 610.2C1514.9 615.8 1522.9 621.5 1531.1 626.9C1538.0 631.4 1545.0 635.6 1552.0 639.9M1374.7 552.3C1383.4 557.4 1392.2 562.4 1400.9 567.6C1413.0 574.9 1424.8 582.6 1436.8 590.2C1446.0 596.0 1455.1 601.9 1464.3 607.7C1474.9 614.4 1485.4 621.1 1496.0 627.7C1503.8 632.5 1511.6 637.2 1519.4 641.9C1526.9 646.4 1534.4 650.8 1542.0 655.3M1482.7 507.9C1478.3 510.5 1473.8 513.0 1469.3 515.5C1463.3 518.8 1457.0 521.9 1451.0 525.5C1447.0 527.9 1443.4 531.0 1439.3 533.0C1434.1 535.4 1428.1 536.1 1422.6 537.7C1415.6 539.9 1408.7 542.5 1401.7 544.7C1392.8 547.4 1383.6 549.6 1374.6 552.2C1369.7 553.6 1364.9 555.0 1360.0 556.4M1631.3 407.5L1631.6 407.3M1361.4 528.6C1363.8 532.6 1366.2 536.5 1368.5 540.5C1370.7 544.4 1372.8 548.3 1374.7 552.3C1378.0 559.2 1380.2 566.6 1383.4 573.5C1385.6 578.3 1388.2 582.8 1390.3 587.6C1396.0 600.4 1399.2 614.3 1403.3 627.7C1406.2 637.3 1408.8 646.9 1411.6 656.5C1417.0 675.1 1421.6 694.0 1427.9 712.3C1431.8 723.6 1436.2 734.7 1440.4 745.9M1496.0 627.7C1486.3 641.8 1477.4 656.6 1466.8 670.0C1454.9 685.0 1440.9 698.2 1427.9 712.3M1519.4 641.9C1511.3 651.3 1502.8 660.3 1495.2 670.0C1485.3 682.8 1477.5 697.2 1468.0 710.3C1459.2 722.4 1449.6 734.0 1440.4 745.9M1386.8 582.4L1399.6 621.1M1391.5 586.2L1402.4 621.1M1273.7 668.6C1288.9 667.0 1304.1 665.2 1319.4 663.8C1333.2 662.6 1347.1 661.8 1360.9 660.5C1367.3 660.0 1373.8 659.2 1380.2 658.7C1390.4 657.7 1400.7 657.1 1410.9 656.3M1273.7 668.6C1289.5 667.8 1305.4 665.7 1321.3 666.2C1326.6 666.4 1332.0 667.1 1337.3 667.1C1352.5 667.4 1367.5 663.3 1382.6 662.4C1392.6 661.8 1402.7 661.8 1412.8 661.5M1316.8 716.5C1316.4 723.2 1315.9 729.9 1315.5 736.6C1315.3 742.4 1315.1 748.3 1314.9 754.2M1372.8 712.7L1375.9 751.7"/>
<path stroke-width="2.86" d="M481.5 484.5C485.3 487.9 488.7 491.6 492.8 494.6C496.3 497.1 500.5 498.9 504.1 501.3C508.5 504.3 512.2 508.3 516.6 511.4C523.3 516.1 530.6 520.1 537.9 523.9C546.0 528.1 554.4 531.7 562.9 535.2C575.2 540.1 587.7 544.6 600.5 547.7C608.7 549.6 617.2 550.9 625.6 552.2C637.0 554.0 648.6 555.4 660.1 556.4C672.8 557.6 685.5 558.2 698.2 558.4C707.4 558.6 716.6 558.6 725.8 558.4C742.5 558.2 759.2 557.0 775.9 555.9C793.9 554.8 811.9 552.9 830.0 551.4M830.0 550.6C839.2 549.6 848.4 548.8 857.6 547.6C881.9 544.7 906.0 540.5 930.2 536.4C947.8 533.4 965.3 530.0 982.8 526.8M1386.8 582.4L1395.8 588.6"/>
<path stroke-width="1.65" d="M600.5 548.2C608.9 549.8 617.2 551.8 625.6 553.2C637.0 555.1 648.6 556.4 660.1 557.4C672.8 558.6 685.5 559.1 698.2 559.4C707.4 559.7 716.6 559.8 725.8 559.7C742.5 559.6 759.2 558.6 775.9 557.7C793.9 556.7 811.9 555.2 830.0 553.9M830.0 553.1C860.5 549.0 891.2 546.1 921.4 540.6C942.0 536.9 962.3 531.9 982.8 527.6M1727.3 408.3L1716.9 396.8M1727.3 408.3L1735.8 393.7M1727.3 408.3L1743.3 392.5M1727.3 408.3L1749.0 392.7M1727.3 408.3L1755.6 395.6M1727.3 408.3L1756.5 402.6M1727.3 408.3L1747.1 415.1M1727.3 408.3L1739.1 423.2M1394.2 436.4L1395.0 445.1L1393.4 455.1M1412.8 661.5C1414.0 669.7 1415.1 677.9 1416.5 686.0C1417.4 691.0 1416.5 697.1 1419.4 701.1C1421.0 703.3 1423.8 704.9 1426.0 706.8M1225.0 720.9C1258.1 717.5 1291.1 712.5 1324.4 710.8C1343.2 709.8 1362.1 710.4 1380.9 709.5C1395.2 708.9 1409.4 707.9 1423.7 707.0"/>
<path stroke-width="2.09" d="M393.8 716.0C399.7 715.3 405.5 714.5 411.4 714.0C421.0 713.0 430.6 712.4 440.2 712.0C467.3 710.6 494.5 713.0 521.6 712.7C535.0 712.6 548.3 712.2 561.7 712.0C626.0 710.8 690.3 710.9 754.6 709.7C779.7 709.3 804.8 708.7 830.0 708.2"/>
<path stroke-width="1.43" d="M1385.9 443.4L1395.0 445.1M1390.0 437.6L1390.9 453.4"/>
<path stroke-width="1.54" d="M1278.4 573.2C1295.8 574.5 1313.3 575.5 1330.7 577.2C1343.3 578.5 1355.9 579.7 1368.4 581.5C1376.3 582.6 1384.2 584.0 1392.0 585.3M1285.5 637.0C1299.0 634.8 1312.4 632.2 1326.0 630.4C1342.6 628.2 1359.4 627.5 1376.0 625.7C1383.8 624.8 1391.7 623.8 1399.6 622.8M1297.7 667.1C1310.9 666.6 1324.1 666.4 1337.3 665.5C1352.4 664.4 1367.5 661.9 1382.6 660.7C1392.3 660.0 1402.1 659.7 1411.8 659.1"/>
<path stroke-width="2.42" d="M1410.9 656.3L1429.3 709.6"/>
<path fill="#0a0a0a" stroke="none" d="M385.6 540.7h4v4h-4zM406.9 527.6h4v4h-4zM479.5 482.5h4v4h-4zM514.6 498.1h4v4h-4zM514.6 509.4h4v4h-4zM658.1 541.9h4v4h-4zM658.1 554.4h4v4h-4zM696.2 544.4h4v4h-4zM696.2 556.4h4v4h-4zM464.5 471.0h4v4h-4zM479.5 482.5h4v4h-4zM365.5 517.4h4v4h-4zM502.1 498.1h4v4h-4zM560.9 533.2h4v4h-4zM598.5 534.4h4v4h-4zM598.5 545.7h4v4h-4zM378.6 543.9h4v4h-4zM401.9 580.7h4v4h-4zM410.1 612.1h4v4h-4zM408.1 620.8h4v4h-4zM410.1 628.3h4v4h-4zM410.1 632.1h4v4h-4zM402.6 664.7h4v4h-4zM400.6 686.5h4v4h-4zM376.1 523.6h4v4h-4zM385.6 540.7h4v4h-4zM418.1 608.3h4v4h-4zM438.2 568.2h4v4h-4zM469.5 607.8h4v4h-4zM534.6 659.7h4v4h-4zM520.8 691.0h4v4h-4zM497.0 547.7h4v4h-4zM528.4 583.8h4v4h-4zM562.2 590.8h4v4h-4zM430.7 624.8h4v4h-4zM738.8 604.5h4v4h-4zM743.8 637.9h4v4h-4zM741.8 674.7h4v4h-4zM752.6 708.0h4v4h-4zM802.7 601.5h4v4h-4zM391.8 714.0h4v4h-4zM396.8 713.7h4v4h-4zM438.2 710.0h4v4h-4zM519.6 710.7h4v4h-4zM559.7 710.0h4v4h-4zM752.6 707.7h4v4h-4zM681.2 723.8h4v4h-4zM740.8 733.3h4v4h-4zM855.6 545.6h4v4h-4zM928.2 534.4h4v4h-4zM919.4 538.1h4v4h-4zM982.1 512.3h4v4h-4zM980.8 524.8h4v4h-4zM886.1 599.0h4v4h-4zM962.0 593.7h4v4h-4zM1051.7 585.2h4v4h-4zM1114.8 578.2h4v4h-4zM1202.5 571.2h4v4h-4zM1276.4 559.4h4v4h-4zM1025.9 529.4h4v4h-4zM1044.7 540.6h4v4h-4zM1050.9 543.6h4v4h-4zM1107.3 550.1h4v4h-4zM1191.2 545.1h4v4h-4zM1266.4 538.1h4v4h-4zM1000.8 526.1h4v4h-4zM1008.4 529.4h4v4h-4zM1013.4 535.1h4v4h-4zM1044.7 551.9h4v4h-4zM1111.6 566.2h4v4h-4zM1202.5 559.4h4v4h-4zM1278.9 552.4h4v4h-4zM964.5 622.8h4v4h-4zM970.8 664.6h4v4h-4zM972.0 700.9h4v4h-4zM968.3 726.9h4v4h-4zM982.1 752.0h4v4h-4zM1063.5 623.3h4v4h-4zM1069.7 673.4h4v4h-4zM1073.0 698.4h4v4h-4zM1076.5 712.6h4v4h-4zM1087.3 736.2h4v4h-4zM1087.3 749.5h4v4h-4zM1126.1 617.0h4v4h-4zM1133.1 667.1h4v4h-4zM1136.6 695.9h4v4h-4zM1202.0 600.7h4v4h-4zM1203.8 659.6h4v4h-4zM1203.8 692.2h4v4h-4zM1211.3 700.9h4v4h-4zM1223.3 719.0h4v4h-4zM1278.2 559.4h4v4h-4zM1276.4 570.7h4v4h-4zM1275.9 589.5h4v4h-4zM1278.2 622.0h4v4h-4zM1278.2 635.8h4v4h-4zM1273.9 657.1h4v4h-4zM1253.9 689.7h4v4h-4zM1236.3 594.5h4v4h-4zM1236.3 663.1h4v4h-4zM1230.1 691.9h4v4h-4zM1151.1 712.6h4v4h-4zM1039.7 737.7h4v4h-4zM998.3 751.2h4v4h-4zM1182.5 726.9h4v4h-4zM1123.6 750.0h4v4h-4zM851.8 745.7h4v4h-4zM1661.8 501.7h4v4h-4zM1636.8 532.2h4v4h-4zM1606.7 568.1h4v4h-4zM1585.0 594.0h4v4h-4zM1570.0 612.4h4v4h-4zM1550.0 637.9h4v4h-4zM1540.0 653.3h4v4h-4zM1524.8 680.8h4v4h-4zM1526.6 693.3h4v4h-4zM1527.3 719.6h4v4h-4zM1523.6 732.1h4v4h-4zM1506.0 739.7h4v4h-4zM1494.7 740.4h4v4h-4zM1482.2 739.7h4v4h-4zM1438.4 743.9h4v4h-4zM1373.3 749.7h4v4h-4zM1313.1 751.7h4v4h-4zM1629.6 405.3h4v4h-4zM1674.9 399.5h4v4h-4zM1714.9 394.8h4v4h-4zM1733.8 391.7h4v4h-4zM1739.0 390.3h4v4h-4zM1747.0 390.3h4v4h-4zM1753.6 393.1h4v4h-4zM1755.0 400.6h4v4h-4zM1745.1 413.1h4v4h-4zM1737.1 421.2h4v4h-4zM1636.7 427.5h4v4h-4zM1681.0 416.2h4v4h-4zM1647.0 457.2h4v4h-4zM1688.5 435.5h4v4h-4zM1698.9 461.9h4v4h-4zM1392.2 434.4h4v4h-4zM1429.8 429.4h4v4h-4zM1470.7 424.7h4v4h-4zM1499.9 420.6h4v4h-4zM1540.0 415.1h4v4h-4zM1574.2 411.7h4v4h-4zM1629.3 405.5h4v4h-4zM1675.2 399.7h4v4h-4zM1384.7 435.6h4v4h-4zM1383.9 441.4h4v4h-4zM1384.7 448.9h4v4h-4zM1391.4 453.1h4v4h-4zM1414.7 466.0h4v4h-4zM1434.8 479.8h4v4h-4zM1446.8 497.9h4v4h-4zM1440.6 510.7h4v4h-4zM1415.6 519.9h4v4h-4zM1423.1 453.1h4v4h-4zM1450.6 470.6h4v4h-4zM1469.8 487.8h4v4h-4zM1480.7 506.2h4v4h-4zM1494.9 502.4h4v4h-4zM1514.1 502.4h4v4h-4zM1545.0 502.4h4v4h-4zM1578.4 502.4h4v4h-4zM1614.2 502.0h4v4h-4zM1661.8 501.9h4v4h-4zM1445.6 446.8h4v4h-4zM1480.7 440.9h4v4h-4zM1509.9 439.4h4v4h-4zM1549.1 436.8h4v4h-4zM1583.4 431.7h4v4h-4zM1636.8 427.7h4v4h-4zM1497.4 472.8h4v4h-4zM1527.4 473.2h4v4h-4zM1564.2 470.6h4v4h-4zM1600.1 469.0h4v4h-4zM1648.5 456.5h4v4h-4zM1467.3 513.9h4v4h-4zM1485.7 523.0h4v4h-4zM1510.7 529.7h4v4h-4zM1540.0 534.7h4v4h-4zM1570.0 536.1h4v4h-4zM1602.6 533.9h4v4h-4zM1449.0 523.5h4v4h-4zM1459.0 528.6h4v4h-4zM1479.0 536.1h4v4h-4zM1509.1 546.4h4v4h-4zM1537.4 551.4h4v4h-4zM1566.7 559.8h4v4h-4zM1590.0 568.1h4v4h-4zM1437.3 531.1h4v4h-4zM1453.1 536.4h4v4h-4zM1474.8 546.7h4v4h-4zM1506.6 560.3h4v4h-4zM1534.9 571.5h4v4h-4zM1560.0 584.0h4v4h-4zM1441.5 546.4h4v4h-4zM1469.0 560.6h4v4h-4zM1494.9 574.0h4v4h-4zM1522.4 588.2h4v4h-4zM1545.8 599.8h4v4h-4zM1428.1 555.6h4v4h-4zM1451.5 573.1h4v4h-4zM1479.9 590.7h4v4h-4zM1504.9 608.2h4v4h-4zM1529.1 624.9h4v4h-4zM1398.9 565.6h4v4h-4zM1434.8 588.2h4v4h-4zM1462.3 605.7h4v4h-4zM1494.0 625.7h4v4h-4zM1517.4 639.9h4v4h-4zM1399.7 542.7h4v4h-4zM1372.7 550.3h4v4h-4zM1359.4 526.6h4v4h-4zM1381.4 571.5h4v4h-4zM1401.3 625.7h4v4h-4zM1409.6 654.5h4v4h-4zM1425.9 710.3h4v4h-4zM1438.4 743.9h4v4h-4zM1276.4 571.0h4v4h-4zM1275.4 589.9h4v4h-4zM1277.3 621.9h4v4h-4zM1324.0 555.4h4v4h-4zM1355.1 554.8h4v4h-4zM1372.6 550.7h4v4h-4zM1326.8 571.2h4v4h-4zM1313.6 577.1h4v4h-4zM1336.7 580.0h4v4h-4zM1360.8 571.5h4v4h-4zM1374.0 584.2h4v4h-4zM1381.5 572.9h4v4h-4zM1384.8 580.4h4v4h-4zM1389.1 583.3h4v4h-4zM1393.8 586.6h4v4h-4zM1393.8 599.3h4v4h-4zM1392.4 607.8h4v4h-4zM1404.2 619.6h4v4h-4zM1278.7 635.9h4v4h-4zM1313.6 627.0h4v4h-4zM1323.1 628.4h4v4h-4zM1374.0 627.0h4v4h-4zM1271.7 666.6h4v4h-4zM1317.4 661.8h4v4h-4zM1358.9 658.5h4v4h-4zM1378.2 656.7h4v4h-4zM1409.8 657.6h4v4h-4zM1413.6 678.3h4v4h-4zM1422.1 693.4h4v4h-4zM1426.8 704.8h4v4h-4zM1223.0 718.9h4v4h-4zM1314.8 713.2h4v4h-4zM1322.4 708.8h4v4h-4zM1370.8 710.7h4v4h-4zM1378.9 708.2h4v4h-4zM1378.9 711.7h4v4h-4zM1395.3 701.3h4v4h-4zM1416.6 699.4h4v4h-4zM1425.4 710.7h4v4h-4zM1313.5 734.6h4v4h-4zM1312.9 752.2h4v4h-4zM1373.9 749.7h4v4h-4z"/>
<g stroke="#050505"><circle cx="982.2" cy="560" r="27.8" stroke-width="1.3"/><circle cx="982.2" cy="560" r="19.3" stroke-width="1.3"/><circle cx="982.2" cy="560" r="23.6" stroke-width="1.1"/></g><g stroke="#050505" stroke-width="0.85" opacity="0.9"><circle cx="1005.8" cy="560.0" r="4.1"/><circle cx="1005.5" cy="563.7" r="4.1"/><circle cx="1004.6" cy="567.3" r="4.1"/><circle cx="1003.2" cy="570.7" r="4.1"/><circle cx="1001.3" cy="573.9" r="4.1"/><circle cx="998.9" cy="576.7" r="4.1"/><circle cx="996.1" cy="579.1" r="4.1"/><circle cx="992.9" cy="581.0" r="4.1"/><circle cx="989.5" cy="582.4" r="4.1"/><circle cx="985.9" cy="583.3" r="4.1"/><circle cx="982.2" cy="583.6" r="4.1"/><circle cx="978.5" cy="583.3" r="4.1"/><circle cx="974.9" cy="582.4" r="4.1"/><circle cx="971.5" cy="581.0" r="4.1"/><circle cx="968.3" cy="579.1" r="4.1"/><circle cx="965.5" cy="576.7" r="4.1"/><circle cx="963.1" cy="573.9" r="4.1"/><circle cx="961.2" cy="570.7" r="4.1"/><circle cx="959.8" cy="567.3" r="4.1"/><circle cx="958.9" cy="563.7" r="4.1"/><circle cx="958.6" cy="560.0" r="4.1"/><circle cx="958.9" cy="556.3" r="4.1"/><circle cx="959.8" cy="552.7" r="4.1"/><circle cx="961.2" cy="549.3" r="4.1"/><circle cx="963.1" cy="546.1" r="4.1"/><circle cx="965.5" cy="543.3" r="4.1"/><circle cx="968.3" cy="540.9" r="4.1"/><circle cx="971.5" cy="539.0" r="4.1"/><circle cx="974.9" cy="537.6" r="4.1"/><circle cx="978.5" cy="536.7" r="4.1"/><circle cx="982.2" cy="536.4" r="4.1"/><circle cx="985.9" cy="536.7" r="4.1"/><circle cx="989.5" cy="537.6" r="4.1"/><circle cx="992.9" cy="539.0" r="4.1"/><circle cx="996.1" cy="540.9" r="4.1"/><circle cx="998.9" cy="543.3" r="4.1"/><circle cx="1001.3" cy="546.1" r="4.1"/><circle cx="1003.2" cy="549.3" r="4.1"/><circle cx="1004.6" cy="552.7" r="4.1"/><circle cx="1005.5" cy="556.3" r="4.1"/></g><g stroke="#050505" stroke-width="0.65" opacity="0.75"><circle cx="1005.7" cy="561.9" r="2.2"/><circle cx="1005.1" cy="565.5" r="2.2"/><circle cx="1004.0" cy="569.0" r="2.2"/><circle cx="1002.3" cy="572.3" r="2.2"/><circle cx="1000.1" cy="575.3" r="2.2"/><circle cx="997.5" cy="577.9" r="2.2"/><circle cx="994.5" cy="580.1" r="2.2"/><circle cx="991.2" cy="581.8" r="2.2"/><circle cx="987.7" cy="582.9" r="2.2"/><circle cx="984.1" cy="583.5" r="2.2"/><circle cx="980.3" cy="583.5" r="2.2"/><circle cx="976.7" cy="582.9" r="2.2"/><circle cx="973.2" cy="581.8" r="2.2"/><circle cx="969.9" cy="580.1" r="2.2"/><circle cx="966.9" cy="577.9" r="2.2"/><circle cx="964.3" cy="575.3" r="2.2"/><circle cx="962.1" cy="572.3" r="2.2"/><circle cx="960.4" cy="569.0" r="2.2"/><circle cx="959.3" cy="565.5" r="2.2"/><circle cx="958.7" cy="561.9" r="2.2"/><circle cx="958.7" cy="558.1" r="2.2"/><circle cx="959.3" cy="554.5" r="2.2"/><circle cx="960.4" cy="551.0" r="2.2"/><circle cx="962.1" cy="547.7" r="2.2"/><circle cx="964.3" cy="544.7" r="2.2"/><circle cx="966.9" cy="542.1" r="2.2"/><circle cx="969.9" cy="539.9" r="2.2"/><circle cx="973.2" cy="538.2" r="2.2"/><circle cx="976.7" cy="537.1" r="2.2"/><circle cx="980.3" cy="536.5" r="2.2"/><circle cx="984.1" cy="536.5" r="2.2"/><circle cx="987.7" cy="537.1" r="2.2"/><circle cx="991.2" cy="538.2" r="2.2"/><circle cx="994.5" cy="539.9" r="2.2"/><circle cx="997.5" cy="542.1" r="2.2"/><circle cx="1000.1" cy="544.7" r="2.2"/><circle cx="1002.3" cy="547.7" r="2.2"/><circle cx="1004.0" cy="551.0" r="2.2"/><circle cx="1005.1" cy="554.5" r="2.2"/><circle cx="1005.7" cy="558.1" r="2.2"/></g><g stroke="#050505"><path stroke-linecap="butt" d="M977.7 536.8A23.6 23.6 0 0 1 986.3 536.8" stroke-width="8.6" opacity=".8"/><path stroke-linecap="butt" d="M973.4 538.1A23.6 23.6 0 0 1 991.0 538.1" stroke-width="8.6" opacity=".3"/><path stroke-linecap="butt" d="M988.8 582.9A23.8 23.8 0 0 1 975.6 582.9" stroke-width="9"/><path stroke-linecap="butt" d="M993.4 581.0A23.8 23.8 0 0 1 971.0 581.0" stroke-width="9" opacity=".35"/><circle cx="980.8" cy="556.5" r="8" stroke-width="9.6"/><circle cx="980.8" cy="556.5" r="13" stroke-width="1" stroke-dasharray="1.5 1"/><circle cx="1503.5" cy="708.6" r="16.6" stroke-width="10.4"/><circle cx="1503.5" cy="708.6" r="9.3" stroke-width="1.1"/><circle cx="1503.5" cy="708.6" r="21.6" stroke-width="1" stroke-dasharray="1.5 1"/></g><circle cx="980.8" cy="556.5" r="10.6" stroke="#aeb4bc" stroke-width="1" stroke-dasharray=".9 3.1" opacity=".75"/><circle cx="980.8" cy="556.5" r="5.2" stroke="#7d8590" stroke-width=".7" opacity=".8"/><circle cx="980.8" cy="556.5" r="8.6" stroke="#7d8590" stroke-width=".7" opacity=".7"/><circle cx="982" cy="556.5" r="2.5" fill="#858d98" stroke="none"/><path d="M980 555h2.6v3H980z" fill="#050505" stroke="none"/><circle cx="1503.5" cy="708.6" r="11" stroke="#aab0b8" stroke-width="1"/><rect x="1501.6" y="706.8" width="3.8" height="3.8" fill="#050505" stroke="none"/><circle cx="1503.5" cy="708.6" r="18.6" stroke="#b4bac2" stroke-width="1" stroke-dasharray=".8 4.3" opacity=".7"/><circle cx="1503.5" cy="708.6" r="14.2" stroke="#b4bac2" stroke-width=".9" stroke-dasharray=".8 5.1" opacity=".6"/><circle cx="1503.5" cy="708.6" r="20.8" stroke="#aab0b8" stroke-width="1" stroke-dasharray="1 2.2" opacity=".7"/><g stroke="#e8830c" stroke-width="1.1" stroke-dasharray="1 3.4"><path d="M1488 706A16 16 0 0 1 1493 696"/><path d="M1520 702A17 17 0 0 1 1518 719"/></g>
</svg>
<div class="t" style="left:458px;top:4.8px;font-size:15.3px;color:#f4f5f7;transform:scaleX(0.9259);">ABS Plastic</div>
<div class="t" style="left:632px;top:4.8px;font-size:15.3px;color:#f4f5f7;transform:scaleX(0.9379);">*Light Red</div>
<div class="t" style="left:941px;top:6.0px;font-size:15.3px;color:#f4f5f7;transform:scaleX(0.9599);">Autodesk Inventor Professional 2026</div>
<div class="t" style="left:1197px;top:6.0px;font-size:15.3px;color:#f4f5f7;transform:scaleX(0.8580);">V3.3</div>
<div class="t" style="left:1319px;top:3.7px;font-size:15.3px;color:#f4f5f7;transform:scaleX(0.9441);">Search Help &amp; Commands...</div>
<div class="t" style="left:1569px;top:4.5px;font-size:15.3px;color:#f4f5f7;transform:scaleX(0.9699);">barrosandre</div>
<div class="t" style="left:1721px;top:5.0px;font-size:15.3px;color:#e8e9ff;transform:scaleX(0.9403);">29</div>
<div class="t" style="left:18px;top:38.5px;font-size:15.3px;color:#ffffff;transform:scaleX(0.9328);">File</div>
<div class="t" style="left:72px;top:38.5px;font-size:15.3px;color:#f4f5f7;transform:scaleX(0.9928);">3D Model</div>
<div class="t" style="left:161px;top:38.5px;font-size:15.3px;color:#c9cfd8;transform:scaleX(0.8981);">Sketch</div>
<div class="t" style="left:229px;top:38.5px;font-size:15.3px;color:#c9cfd8;transform:scaleX(0.9796);">Annotate</div>
<div class="t" style="left:315px;top:38.5px;font-size:15.3px;color:#c9cfd8;transform:scaleX(0.9528);">Inspect</div>
<div class="t" style="left:387px;top:38.5px;font-size:15.3px;color:#c9cfd8;transform:scaleX(0.9799);">Tools</div>
<div class="t" style="left:447px;top:38.5px;font-size:15.3px;color:#c9cfd8;transform:scaleX(0.9118);">CAM</div>
<div class="t" style="left:503px;top:38.5px;font-size:15.3px;color:#c9cfd8;transform:scaleX(0.9768);">Manage</div>
<div class="t" style="left:581px;top:38.5px;font-size:15.3px;color:#c9cfd8;transform:scaleX(0.9729);">View</div>
<div class="t" style="left:637px;top:38.5px;font-size:15.3px;color:#c9cfd8;transform:scaleX(0.9516);">Environments</div>
<div class="t" style="left:751px;top:38.5px;font-size:15.3px;color:#c9cfd8;transform:scaleX(0.8928);">Fusion</div>
<div class="t" style="left:817px;top:38.5px;font-size:15.3px;color:#c9cfd8;transform:scaleX(0.9842);">Collaborate</div>
<div class="t" style="left:36px;top:113.0px;font-size:15.3px;color:#f4f5f7;transform:scaleX(0.9594);">Start</div>
<div class="t" style="left:18px;top:133.0px;font-size:15.3px;color:#f4f5f7;transform:scaleX(0.9210);">2D Sketch</div>
<div class="t" style="left:108px;top:111.0px;font-size:15.3px;color:#f4f5f7;transform:scaleX(0.9295);">Extrude</div>
<div class="t" style="left:166px;top:111.0px;font-size:15.3px;color:#f4f5f7;transform:scaleX(0.9228);">Revolve</div>
<div class="t" style="left:498px;top:111.0px;font-size:15.3px;color:#f4f5f7;transform:scaleX(0.9851);">Hole</div>
<div class="t" style="left:552px;top:112.0px;font-size:15.3px;color:#f4f5f7;transform:scaleX(0.9598);">Fillet</div>
<div class="t" style="left:1046px;top:112.0px;font-size:15.3px;color:#f4f5f7;transform:scaleX(0.9043);">Shape</div>
<div class="t" style="left:1032px;top:132.0px;font-size:15.3px;color:#f4f5f7;transform:scaleX(0.9583);">Generator</div>
<div class="t" style="left:1123px;top:112.0px;font-size:15.3px;color:#f4f5f7;transform:scaleX(0.9201);">Plane</div>
<div class="t" style="left:1347px;top:112.0px;font-size:15.3px;color:#f4f5f7;transform:scaleX(0.9105);">Box</div>
<div class="t" style="left:1590px;top:112.0px;font-size:15.3px;color:#f4f5f7;transform:scaleX(1.0085);">Simplify</div>
<div class="t" style="left:1702px;top:112.0px;font-size:15.3px;color:#f4f5f7;transform:scaleX(0.8764);">Stress</div>
<div class="t" style="left:1694px;top:132.0px;font-size:15.3px;color:#f4f5f7;transform:scaleX(0.9303);">Analysis</div>
<div class="t" style="left:1773px;top:112.0px;font-size:15.3px;color:#f4f5f7;transform:scaleX(0.9776);">Convert to</div>
<div class="t" style="left:1768px;top:132.0px;font-size:15.3px;color:#f4f5f7;transform:scaleX(0.9677);">Sheet Metal</div>
<div class="t" style="left:254px;top:69.0px;font-size:15.3px;color:#f4f5f7;transform:scaleX(0.9192);">Sweep</div>
<div class="t" style="left:254px;top:100.0px;font-size:15.3px;color:#f4f5f7;transform:scaleX(0.9798);">Loft</div>
<div class="t" style="left:254px;top:131.0px;font-size:15.3px;color:#f4f5f7;transform:scaleX(0.9484);">Coil</div>
<div class="t" style="left:336px;top:69.0px;font-size:15.3px;color:#f4f5f7;transform:scaleX(0.9228);">Emboss</div>
<div class="t" style="left:336px;top:100.0px;font-size:15.3px;color:#f4f5f7;transform:scaleX(0.9502);">Derive</div>
<div class="t" style="left:337px;top:131.0px;font-size:15.3px;color:#f4f5f7;transform:scaleX(0.9149);">Rib</div>
<div class="t" style="left:427px;top:69.0px;font-size:15.3px;color:#f4f5f7;transform:scaleX(0.9205);">Decal</div>
<div class="t" style="left:426px;top:100.0px;font-size:15.3px;color:#f4f5f7;transform:scaleX(1.0378);">Import</div>
<div class="t" style="left:426px;top:131.0px;font-size:15.3px;color:#f4f5f7;transform:scaleX(0.9484);">Unwrap</div>
<div class="t" style="left:630px;top:69.0px;font-size:15.3px;color:#f4f5f7;transform:scaleX(0.9547);">Chamfer</div>
<div class="t" style="left:630px;top:100.0px;font-size:15.3px;color:#f4f5f7;transform:scaleX(0.9407);">Shell</div>
<div class="t" style="left:631px;top:131.0px;font-size:15.3px;color:#f4f5f7;transform:scaleX(0.9953);">Draft</div>
<div class="t" style="left:726px;top:69.0px;font-size:15.3px;color:#f4f5f7;transform:scaleX(0.9284);">Thread</div>
<div class="t" style="left:726px;top:100.0px;font-size:15.3px;color:#f4f5f7;transform:scaleX(0.9638);">Combine</div>
<div class="t" style="left:726px;top:131.0px;font-size:15.3px;color:#f4f5f7;transform:scaleX(0.9747);">Thicken/ Offset</div>
<div class="t" style="left:864px;top:69.0px;font-size:15.3px;color:#f4f5f7;transform:scaleX(1.0079);">Split</div>
<div class="t" style="left:865px;top:100.0px;font-size:15.3px;color:#f4f5f7;transform:scaleX(0.9761);">Direct</div>
<div class="t" style="left:864px;top:131.0px;font-size:15.3px;color:#f4f5f7;transform:scaleX(0.9214);">Delete Face</div>
<div class="t" style="left:979px;top:69.0px;font-size:15.3px;color:#f4f5f7;transform:scaleX(0.9706);">Mark</div>
<div class="t" style="left:979px;top:100.0px;font-size:15.3px;color:#f4f5f7;transform:scaleX(0.8821);">Finish</div>
<div class="t" style="left:1204px;top:69.0px;font-size:15.3px;color:#f4f5f7;transform:scaleX(0.9341);">Axis</div>
<div class="t" style="left:1204px;top:100.0px;font-size:15.3px;color:#f4f5f7;transform:scaleX(0.9462);">Point</div>
<div class="t" style="left:1204px;top:131.0px;font-size:15.3px;color:#f4f5f7;transform:scaleX(0.8360);">UCS</div>
<div class="t" style="left:1416px;top:69.0px;font-size:15.3px;color:#f4f5f7;transform:scaleX(0.8232);">Face</div>
<div class="t" style="left:31px;top:159.0px;font-size:15.3px;color:#b4bcc8;transform:scaleX(0.8981);">Sketch</div>
<div class="t" style="left:273px;top:159.0px;font-size:15.3px;color:#b4bcc8;transform:scaleX(0.9146);">Create</div>
<div class="t" style="left:725px;top:159.0px;font-size:15.3px;color:#b4bcc8;transform:scaleX(1.0430);">Modify</div>
<div class="t" style="left:1041px;top:159.0px;font-size:15.3px;color:#b4bcc8;transform:scaleX(0.9446);">Explore</div>
<div class="t" style="left:1138px;top:159.0px;font-size:15.3px;color:#b4bcc8;transform:scaleX(0.9297);">Work Features</div>
<div class="t" style="left:1273px;top:159.0px;font-size:15.3px;color:#b4bcc8;transform:scaleX(0.9123);">Pattern</div>
<div class="t" style="left:1340px;top:159.0px;font-size:15.3px;color:#b4bcc8;transform:scaleX(0.9446);">Create Freeform</div>
<div class="t" style="left:1480px;top:159.0px;font-size:15.3px;color:#b4bcc8;transform:scaleX(0.9295);">Surface</div>
<div class="t" style="left:1562px;top:159.0px;font-size:15.3px;color:#b4bcc8;transform:scaleX(1.0208);">Simplification</div>
<div class="t" style="left:1685px;top:159.0px;font-size:15.3px;color:#b4bcc8;transform:scaleX(0.9941);">Simulation</div>
<div class="t" style="left:1783px;top:159.0px;font-size:15.3px;color:#b4bcc8;transform:scaleX(0.9522);">Convert</div>
<div class="t" style="left:5px;top:183.7px;font-size:13px;color:#f4f5f7;transform:scaleX(0.9316);">Model</div>
<div class="t" style="left:26px;top:208.7px;font-size:13px;color:#f4f5f7;transform:scaleX(0.9979);">V3.3.ipt</div>
<div class="t" style="left:46px;top:233.7px;font-size:13px;color:#f4f5f7;transform:scaleX(0.9718);">Representations</div>
<div class="t" style="left:66px;top:258.7px;font-size:13px;color:#f4f5f7;transform:scaleX(1.0186);">Model State: [Primary]</div>
<div class="t" style="left:66px;top:283.7px;font-size:13px;color:#f4f5f7;transform:scaleX(1.0324);">View: [Primary]</div>
<div class="t" style="left:46px;top:308.7px;font-size:13px;color:#f4f5f7;transform:scaleX(0.9802);">Surface Bodies(2)</div>
<div class="t" style="left:46px;top:333.7px;font-size:13px;color:#f4f5f7;transform:scaleX(0.9514);">Origin</div>
<div class="t" style="left:46px;top:358.7px;font-size:13px;color:#f4f5f7;transform:scaleX(0.9365);">Sketch1</div>
<div class="t" style="left:46px;top:383.7px;font-size:13px;color:#f4f5f7;transform:scaleX(0.9570);">Work Plane1</div>
<div class="t" style="left:46px;top:408.7px;font-size:13px;color:#f4f5f7;transform:scaleX(0.9672);">3D Master</div>
<div class="t" style="left:46px;top:433.7px;font-size:13px;color:#7d828b;transform:scaleX(0.9535);">Boundary Patch57</div>
<div class="t" style="left:46px;top:458.7px;font-size:13px;color:#7d828b;transform:scaleX(0.9535);">Boundary Patch58</div>
<div class="t" style="left:46px;top:483.7px;font-size:13px;color:#f4f5f7;transform:scaleX(0.9685);">End of Part</div>
<div class="t" style="left:260px;top:966.0px;font-size:15.3px;color:#e0e3e8;transform:scaleX(0.9801);">Home</div>
<div class="t" style="left:320px;top:964.5px;font-size:15.3px;color:#f4f5f7;transform:scaleX(0.9446);">V3.3.ipt</div>
<div class="t" style="left:2px;top:997.0px;font-size:15.3px;color:#f4f5f7;transform:scaleX(0.9079);">For Help, press F1</div>
<div class="t" style="left:1853px;top:995.0px;font-size:15.3px;color:#f4f5f7;transform:scaleX(0.7046);">1</div>
<div class="t" style="left:1891px;top:995.0px;font-size:15.3px;color:#f4f5f7;transform:scaleX(0.7046);">1</div>
</body></html>
